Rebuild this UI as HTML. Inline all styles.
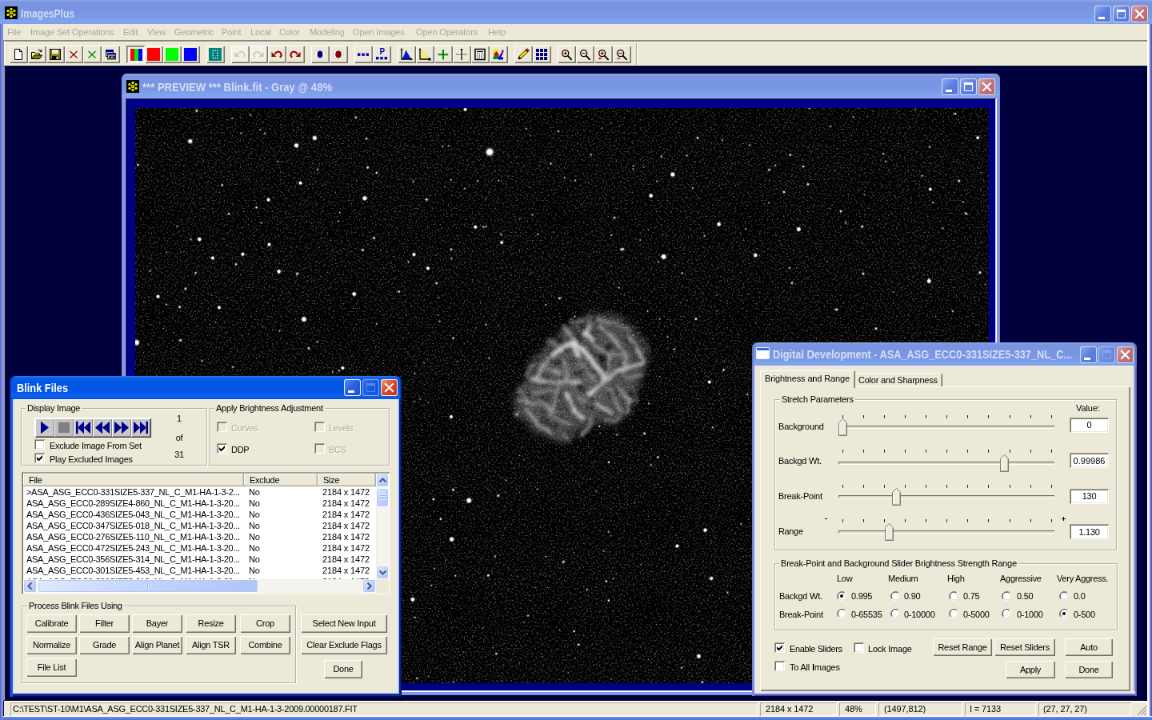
<!DOCTYPE html>
<html lang="en"><head><meta charset="utf-8"><title>ImagesPlus</title>
<style>
html,body{margin:0;padding:0;}
body{width:1152px;height:720px;overflow:hidden;background:#00003c;font-family:"Liberation Sans",sans-serif;font-size:11px;}
#r{position:absolute;left:0;top:0;width:1440px;height:900px;overflow:hidden;transform:scale(0.8);transform-origin:0 0;will-change:transform;}
#r div,#r svg{position:absolute;box-sizing:border-box;}
.t{white-space:nowrap;overflow:visible;}
.btn{background:#ece9d8;box-shadow:inset 1px 1px 0 #fff,inset -1px -1px 0 #716f64,inset -2px -2px 0 #aca899;text-align:center;}
.tb{background:#ece9d8;box-shadow:inset 1px 1px 0 #fff,inset -1px -1px 0 #716f64,inset -2px -2px 0 #aca899;}
.sunk{background:#fff;box-shadow:inset 1px 1px 0 #aca899,inset -1px -1px 0 #fff,inset 2px 2px 0 #716f64,inset -2px -2px 0 #ece9d8;}
.grp{border:1px solid #b5b2a1;box-shadow:1px 1px 0 #fff,inset 1px 1px 0 #fff;}
.leg{background:#ece9d8;padding:0 2px;}
.cb{background:#fff;box-shadow:inset 1px 1px 0 #aca899,inset -1px -1px 0 #fff,inset 2px 2px 0 #716f64,inset -2px -2px 0 #ece9d8;}
.cbd{background:#ece9d8;box-shadow:inset 1px 1px 0 #aca899,inset -1px -1px 0 #fff,inset 2px 2px 0 #716f64,inset -2px -2px 0 #ece9d8;}
</style></head><body><div id="r">

<div style="left:0px;top:0px;width:1440px;height:30px;background:linear-gradient(180deg,#8fa8ea 0,#7b96e0 10%,#7994e0 35%,#7b9ae6 70%,#82a5ef 92%,#7e9de8 100%);"></div>
<svg style="left:6px;top:8px" width="16" height="16" viewBox="0 0 16 16"><rect width="16" height="16" fill="#000"/><g fill="#e8e800"><circle cx="8" cy="8" r="2.2"/><circle cx="8" cy="3.4" r="1.7"/><circle cx="8" cy="12.6" r="1.7"/><circle cx="4" cy="5.6" r="1.7"/><circle cx="12" cy="5.6" r="1.7"/><circle cx="4" cy="10.4" r="1.7"/><circle cx="12" cy="10.4" r="1.7"/></g><g fill="#000"><circle cx="8" cy="8" r="0.7"/></g></svg>
<div class="t" style="left:26px;top:9px;height:17px;line-height:17px;font-size:14px;color:#d0dcf6;font-weight:bold;transform:scaleX(0.8609);transform-origin:0 50%;">ImagesPlus</div>
<div style="left:1368px;top:7px;width:21px;height:21px;border:1px solid rgba(240,244,253,0.8);border-radius:3px;background:linear-gradient(135deg,#8fa9ee 0,#5d7fe0 50%,#5878d8 100%);"><div style="left:4px;top:13px;width:8px;height:3px;background:#fff"></div></div>
<div style="left:1391px;top:7px;width:21px;height:21px;border:1px solid rgba(240,244,253,0.8);border-radius:3px;background:linear-gradient(135deg,#8fa9ee 0,#5d7fe0 50%,#5878d8 100%);"><div style="left:4px;top:4px;width:11px;height:11px;border:1px solid #fff;border-top-width:3px"></div></div>
<div style="left:1414px;top:7px;width:21px;height:21px;border:1px solid rgba(240,244,253,0.8);border-radius:3px;background:linear-gradient(135deg,#d8a0a8 0,#c2727a 50%,#b4656e 100%);"><svg style="left:0;top:0" width="19" height="19" viewBox="0 0 19 19"><path d="M5 5L14 14M14 5L5 14" stroke="#fff" stroke-width="2.2" stroke-linecap="square"/></svg></div>
<div style="left:0px;top:30px;width:4px;height:870px;background:linear-gradient(90deg,#5a66cc 0,#5a66cc 25%,#7485de 26%,#8a96dc 100%);"></div>
<div style="left:1434px;top:30px;width:6px;height:870px;background:linear-gradient(90deg,#fff 0,#fff 34%,#dfe2f2 35%,#dfe2f2 50%,#7a80cf 51%,#7a80cf 83%,#4c55b5 84%,#4c55b5 100%);"></div>
<div style="left:0px;top:895px;width:1440px;height:5px;background:linear-gradient(180deg,#fff 0,#fff 20%,#6f8fe4 21%,#4a74da 100%);"></div>
<div style="left:0px;top:895px;width:4px;height:5px;background:linear-gradient(90deg,#5a66cc 0,#5a66cc 25%,#7485de 26%,#7a8ee0 100%);"></div>
<div style="left:4px;top:30px;width:1430px;height:20px;background:#ece9d8;"></div>
<div class="t" style="left:9px;top:33px;height:14px;line-height:14px;font-size:11px;color:#aca899;letter-spacing:-0.12px;">File</div>
<div class="t" style="left:38px;top:33px;height:14px;line-height:14px;font-size:11px;color:#aca899;letter-spacing:-0.12px;">Image Set Operations</div>
<div class="t" style="left:154px;top:33px;height:14px;line-height:14px;font-size:11px;color:#aca899;letter-spacing:-0.12px;">Edit</div>
<div class="t" style="left:184px;top:33px;height:14px;line-height:14px;font-size:11px;color:#aca899;letter-spacing:-0.12px;">View</div>
<div class="t" style="left:218px;top:33px;height:14px;line-height:14px;font-size:11px;color:#aca899;letter-spacing:-0.12px;">Geometric</div>
<div class="t" style="left:277px;top:33px;height:14px;line-height:14px;font-size:11px;color:#aca899;letter-spacing:-0.12px;">Point</div>
<div class="t" style="left:313px;top:33px;height:14px;line-height:14px;font-size:11px;color:#aca899;letter-spacing:-0.12px;">Local</div>
<div class="t" style="left:349px;top:33px;height:14px;line-height:14px;font-size:11px;color:#aca899;letter-spacing:-0.12px;">Color</div>
<div class="t" style="left:387px;top:33px;height:14px;line-height:14px;font-size:11px;color:#aca899;letter-spacing:-0.12px;">Modeling</div>
<div class="t" style="left:441px;top:33px;height:14px;line-height:14px;font-size:11px;color:#aca899;letter-spacing:-0.12px;">Open Images</div>
<div class="t" style="left:520px;top:33px;height:14px;line-height:14px;font-size:11px;color:#aca899;letter-spacing:-0.12px;">Open Operators</div>
<div class="t" style="left:610px;top:33px;height:14px;line-height:14px;font-size:11px;color:#aca899;letter-spacing:-0.12px;">Help</div>
<div style="left:4px;top:50px;width:1430px;height:32px;background:#ece9d8;border-top:2px solid #8d8a7b;box-shadow:inset 0 1px 0 #fff,inset 0 -1px 0 #fff;"></div>
<div style="left:4px;top:51px;width:2px;height:31px;background:linear-gradient(90deg,#8d8a7b 50%,#fff 50%);"></div>
<div class="tb" style="left:12px;top:57px;width:23px;height:22px;"></div>
<svg style="left:15px;top:60px" width="16" height="16" viewBox="0 0 16 16"><path d="M3.5 1.5h6l3 3v10h-9z" fill="#fff" stroke="#000"/><path d="M9.5 1.5v3h3" fill="none" stroke="#000"/></svg>
<div class="tb" style="left:35px;top:57px;width:23px;height:22px;"></div>
<svg style="left:38px;top:60px" width="16" height="16" viewBox="0 0 16 16"><path d="M1.5 13.5v-8h4l1 1.5h5v2" fill="#ffff80" stroke="#000"/><path d="M1.5 13.5l3-4.5h10l-3 4.5z" fill="#808000" stroke="#000"/><path d="M9 3.5c1.5-2 3.5-1.5 4.5 0.5M14 2v2.5h-2.5" fill="none" stroke="#000"/></svg>
<div class="tb" style="left:58px;top:57px;width:23px;height:22px;"></div>
<svg style="left:61px;top:60px" width="16" height="16" viewBox="0 0 16 16"><rect x="1.5" y="1.5" width="13" height="13" fill="#808000" stroke="#000"/><rect x="4" y="2" width="8" height="5.5" fill="#ece9d8"/><rect x="4" y="10" width="8" height="4.5" fill="#000"/><rect x="9.5" y="10.5" width="2" height="3.5" fill="#ece9d8"/></svg>
<div class="tb" style="left:81px;top:57px;width:23px;height:22px;"></div>
<svg style="left:84px;top:60px" width="16" height="16" viewBox="0 0 16 16"><path d="M3.500 4L12.500 12.500M12.500 4L3.500 12.500" stroke="#a00000" stroke-width="1.200"/></svg>
<div class="tb" style="left:104px;top:57px;width:23px;height:22px;"></div>
<svg style="left:107px;top:60px" width="16" height="16" viewBox="0 0 16 16"><path d="M3.500 4L12.500 12.500M12.500 4L3.500 12.500" stroke="#008000" stroke-width="1.200"/></svg>
<div class="tb" style="left:127px;top:57px;width:23px;height:22px;"></div>
<svg style="left:130px;top:60px" width="16" height="16" viewBox="0 0 16 16"><rect x="2.500" y="2.500" width="9" height="8" fill="#c0c0c0" stroke="#000080"/><rect x="2" y="2" width="10" height="3" fill="#000080"/><rect x="4.500" y="6.500" width="10" height="7.500" fill="#c0c0c0" stroke="#202020"/><rect x="4" y="6" width="11" height="2.600" fill="#1a1a90"/><rect x="6.500" y="9.800" width="7" height="3.400" fill="#000"/><rect x="8.500" y="10.700" width="3" height="1.500" fill="#fff"/></svg>
<div style="left:158px;top:57px;width:23px;height:22px;background:#f7f6ef;box-shadow:inset 1px 1px 0 #716f64,inset -1px -1px 0 #fff,inset 2px 2px 0 #aca899;"></div>
<svg style="left:162px;top:60px" width="16" height="16" viewBox="0 0 16 16"><rect x="1" y="1" width="5" height="15" fill="#f00"/><rect x="6" y="1" width="5" height="15" fill="#0e0"/><rect x="11" y="1" width="5" height="15" fill="#00f"/></svg>
<div class="tb" style="left:181px;top:57px;width:23px;height:22px;"></div>
<svg style="left:184px;top:60px" width="16" height="16" viewBox="0 0 16 16"><rect x="0" y="0" width="16" height="16" fill="#f00"/></svg>
<div class="tb" style="left:204px;top:57px;width:23px;height:22px;"></div>
<svg style="left:207px;top:60px" width="16" height="16" viewBox="0 0 16 16"><rect x="0" y="0" width="16" height="16" fill="#0f0"/></svg>
<div class="tb" style="left:227px;top:57px;width:23px;height:22px;"></div>
<svg style="left:230px;top:60px" width="16" height="16" viewBox="0 0 16 16"><rect x="0" y="0" width="16" height="16" fill="#00f"/></svg>
<div class="tb" style="left:258px;top:57px;width:23px;height:22px;"></div>
<svg style="left:261px;top:60px" width="16" height="16" viewBox="0 0 16 16"><rect x="0" y="0" width="16" height="16" fill="#008080"/><rect x="4.5" y="2.5" width="1.400" height="1.400" fill="#fff"/><rect x="4.5" y="5.6" width="1.400" height="1.400" fill="#fff"/><rect x="4.5" y="8.7" width="1.400" height="1.400" fill="#fff"/><rect x="4.5" y="11.8" width="1.400" height="1.400" fill="#fff"/><rect x="10" y="2.5" width="1.400" height="1.400" fill="#fff"/><rect x="10" y="5.6" width="1.400" height="1.400" fill="#fff"/><rect x="10" y="8.7" width="1.400" height="1.400" fill="#fff"/><rect x="10" y="11.8" width="1.400" height="1.400" fill="#fff"/><rect x="7.25" y="2.5" width="1.400" height="1.400" fill="#fff"/><rect x="7.25" y="11.8" width="1.400" height="1.400" fill="#fff"/></svg>
<div class="tb" style="left:289px;top:57px;width:23px;height:22px;background:#f3f1e7;"></div>
<svg style="left:292px;top:60px" width="16" height="16" viewBox="0 0 16 16"><g><path d="M5.500 8C6.500 4 11.500 3.500 13.200 6.800C14.200 9 13 10.800 11.800 11.600" fill="none" stroke="#c4c1b2" stroke-width="1.3"/><path d="M1.500 5v6h6z" fill="#c4c1b2"/></g></svg>
<div class="tb" style="left:312px;top:57px;width:23px;height:22px;background:#f3f1e7;"></div>
<svg style="left:315px;top:60px" width="16" height="16" viewBox="0 0 16 16"><g transform="translate(16,0) scale(-1,1)"><path d="M5.500 8C6.500 4 11.500 3.500 13.200 6.800C14.200 9 13 10.800 11.800 11.600" fill="none" stroke="#c4c1b2" stroke-width="1.3"/><path d="M1.500 5v6h6z" fill="#c4c1b2"/></g></svg>
<div class="tb" style="left:335px;top:57px;width:23px;height:22px;"></div>
<svg style="left:338px;top:60px" width="16" height="16" viewBox="0 0 16 16"><g><path d="M5.500 8C6.500 4 11.500 3.500 13.200 6.800C14.200 9 13 10.800 11.800 11.600" fill="none" stroke="#9a0000" stroke-width="2.0"/><path d="M1.500 5v6h6z" fill="#9a0000"/></g></svg>
<div class="tb" style="left:358px;top:57px;width:23px;height:22px;"></div>
<svg style="left:361px;top:60px" width="16" height="16" viewBox="0 0 16 16"><g transform="translate(16,0) scale(-1,1)"><path d="M5.500 8C6.500 4 11.500 3.500 13.200 6.800C14.200 9 13 10.800 11.800 11.600" fill="none" stroke="#9a0000" stroke-width="2.0"/><path d="M1.500 5v6h6z" fill="#9a0000"/></g></svg>
<div class="tb" style="left:389px;top:57px;width:23px;height:22px;"></div>
<svg style="left:392px;top:60px" width="16" height="16" viewBox="0 0 16 16"><ellipse cx="8" cy="8" rx="6.5" ry="6" fill="#fff" stroke="#d4d2c8"/><ellipse cx="8" cy="8" rx="3.400" ry="4.400" fill="#000070"/></svg>
<div class="tb" style="left:412px;top:57px;width:23px;height:22px;"></div>
<svg style="left:415px;top:60px" width="16" height="16" viewBox="0 0 16 16"><ellipse cx="8" cy="8" rx="6.5" ry="6" fill="#fff" stroke="#d4d2c8"/><ellipse cx="8" cy="8" rx="3.800" ry="4.400" fill="#800000"/></svg>
<div class="tb" style="left:443px;top:57px;width:23px;height:22px;"></div>
<svg style="left:446px;top:60px" width="16" height="16" viewBox="0 0 16 16"><rect x="1" y="6.500" width="3.400" height="3.400" fill="#0000b8"/><rect x="6.300" y="6.500" width="3.400" height="3.400" fill="#0000b8"/><rect x="11.600" y="6.500" width="3.400" height="3.400" fill="#0000b8"/></svg>
<div class="tb" style="left:466px;top:57px;width:23px;height:22px;"></div>
<svg style="left:469px;top:60px" width="16" height="16" viewBox="0 0 16 16"><rect x="1" y="11" width="3.400" height="3.400" fill="#0000b8"/><rect x="6.300" y="11" width="3.400" height="3.400" fill="#0000b8"/><rect x="11.600" y="11" width="3.400" height="3.400" fill="#0000b8"/><text x="8.800" y="8.200" font-size="10" font-weight="bold" fill="#0000b8" text-anchor="middle" font-family="Liberation Sans,sans-serif">P</text></svg>
<div class="tb" style="left:497px;top:57px;width:23px;height:22px;"></div>
<svg style="left:500px;top:60px" width="16" height="16" viewBox="0 0 16 16"><path d="M2.500 14L5.500 8l2-5.500L10 7l4 7z" fill="#0018e0"/><path d="M2 1.500v12.500h13" fill="none" stroke="#000" stroke-width="1.300"/><path d="M2 0l-1.500 2.500h3zM16 14l-2.500-1.500v3z" fill="#000"/></svg>
<div class="tb" style="left:520px;top:57px;width:23px;height:22px;"></div>
<svg style="left:523px;top:60px" width="16" height="16" viewBox="0 0 16 16"><path d="M3 13.500V5c4.500-1.500 7.500 1 9 8.500z" fill="#f4f080" stroke="#e8e060" stroke-width="1"/><path d="M2 1.500v12.500h12" fill="none" stroke="#000" stroke-width="1.300"/><rect x="12.500" y="12.500" width="3" height="3" fill="#000"/><path d="M2 0l-1.500 2.500h3z" fill="#000"/></svg>
<div class="tb" style="left:543px;top:57px;width:23px;height:22px;"></div>
<svg style="left:546px;top:60px" width="16" height="16" viewBox="0 0 16 16"><path d="M8 2v12.500M1.800 8.200h12.400" stroke="#008800" stroke-width="2"/></svg>
<div class="tb" style="left:566px;top:57px;width:23px;height:22px;"></div>
<svg style="left:569px;top:60px" width="16" height="16" viewBox="0 0 16 16"><circle cx="8" cy="8" r="3.500" fill="#fff" opacity="0.8"/><path d="M1 8h14" stroke="#808080" stroke-width="1.300"/><path d="M8 1v14" stroke="#000" stroke-width="1.300"/><rect x="6.800" y="1" width="2.400" height="1.400" fill="#000"/></svg>
<div class="tb" style="left:589px;top:57px;width:23px;height:22px;"></div>
<svg style="left:592px;top:60px" width="16" height="16" viewBox="0 0 16 16"><rect x="2" y="1.500" width="12" height="13" fill="#fff" stroke="#000" stroke-width="1.500"/><path d="M4 4.500h8" stroke="#000" stroke-width="1.300"/><path d="M4 7.500h8.500M4 10h8.500M4 12.500h8.500" stroke="#000" stroke-width="1.200" stroke-dasharray="1.400 1.200"/></svg>
<div class="tb" style="left:612px;top:57px;width:23px;height:22px;"></div>
<svg style="left:615px;top:60px" width="16" height="16" viewBox="0 0 16 16"><rect x="1.500" y="2" width="6.500" height="6" fill="#f0e800"/><path d="M2 8.500l3.500-4.500 3.500 4.500z" fill="#c00000"/><rect x="2.500" y="8" width="6" height="3" fill="#a03020"/><rect x="1.500" y="10.500" width="7" height="3.500" fill="#008040"/><path d="M7.500 13l5-8.500 1.500 1-4 8.500z" fill="#0000d0"/><rect x="8" y="11.500" width="6" height="3" fill="#0000d0"/><path d="M11.500 4.500l2-3 1.500 3z" fill="#9000a0"/><rect x="12.300" y="4" width="1.600" height="3" fill="#9000a0"/></svg>
<div class="tb" style="left:643px;top:57px;width:23px;height:22px;"></div>
<svg style="left:646px;top:60px" width="16" height="16" viewBox="0 0 16 16"><path d="M2 14l1-3.5 8-8 2.5 2.5-8 8z" fill="#f0e000" stroke="#000" stroke-width="0.9"/><path d="M11 2.5l1.2-1.2a1 1 0 0 1 1.4 0l1.1 1.1a1 1 0 0 1 0 1.4L13.500 5z" fill="#e00000" stroke="#000" stroke-width="0.8"/><path d="M2 14l1-3.5 2.500 2.500z" fill="#000"/></svg>
<div class="tb" style="left:666px;top:57px;width:23px;height:22px;"></div>
<svg style="left:669px;top:60px" width="16" height="16" viewBox="0 0 16 16"><rect x="1" y="1" width="14" height="14" fill="#000080"/><path d="M5.500 1v14M10.500 1v14M1 5.500h14M1 10.500h14" stroke="#fff" stroke-width="1.1"/></svg>
<div class="tb" style="left:697px;top:57px;width:23px;height:22px;"></div>
<svg style="left:700px;top:60px" width="16" height="16" viewBox="0 0 16 16"><circle cx="6.700" cy="6.600" r="4" fill="#f6f4ec" stroke="#000" stroke-width="1.300"/><path d="M9.600 9.600l5 5.200" stroke="#000" stroke-width="1.900"/><path d="M4.500 6.600h4.400" stroke="#b00000" stroke-width="1.400"/><path d="M6.700 4.400v4.400" stroke="#b00000" stroke-width="1.400"/></svg>
<div class="tb" style="left:720px;top:57px;width:23px;height:22px;"></div>
<svg style="left:723px;top:60px" width="16" height="16" viewBox="0 0 16 16"><circle cx="6.700" cy="6.600" r="4" fill="#f6f4ec" stroke="#000" stroke-width="1.300"/><path d="M9.600 9.600l5 5.200" stroke="#000" stroke-width="1.900"/><path d="M4.500 6.600h4.400" stroke="#b00000" stroke-width="1.400"/></svg>
<div class="tb" style="left:743px;top:57px;width:23px;height:22px;"></div>
<svg style="left:746px;top:60px" width="16" height="16" viewBox="0 0 16 16"><circle cx="6.700" cy="6.600" r="4" fill="#f6f4ec" stroke="#000" stroke-width="1.300"/><path d="M9.600 9.600l5 5.200" stroke="#000" stroke-width="1.900"/><path d="M4.500 6.600h4.400" stroke="#b00000" stroke-width="1.400"/><path d="M6.700 4.400v4.400" stroke="#b00000" stroke-width="1.400"/><path d="M2.400 13.200h3.800" stroke="#c03030" stroke-width="1.600"/><path d="M3.600 11.800v2.800" stroke="#c03030" stroke-width="1.200"/></svg>
<div class="tb" style="left:766px;top:57px;width:23px;height:22px;"></div>
<svg style="left:769px;top:60px" width="16" height="16" viewBox="0 0 16 16"><circle cx="6.700" cy="6.600" r="4" fill="#f6f4ec" stroke="#000" stroke-width="1.300"/><path d="M9.600 9.600l5 5.200" stroke="#000" stroke-width="1.900"/><path d="M4.500 6.600h4.400" stroke="#b00000" stroke-width="1.400"/><path d="M2.400 13.200h3.800" stroke="#c03030" stroke-width="1.600"/></svg>
<div style="left:795px;top:54px;width:2px;height:27px;background:linear-gradient(90deg,#aca899 50%,#fff 50%);"></div>
<div style="left:4px;top:82px;width:1430px;height:794px;border-left:2px solid #8f97c4;border-top:1px solid #101020;box-shadow:inset 1px 0 0 #1e1e3c;"></div>
<div style="left:5px;top:875px;width:1429px;height:20px;background:#ece9d8;border-top:1px solid #00001c;box-shadow:inset 0 2px 0 #fff;"></div>
<div style="left:13px;top:878px;width:934px;height:17px;box-shadow:inset 1px 1px 0 #aca899,inset -1px -1px 0 #fff;"></div>
<div style="left:950px;top:878px;width:96px;height:17px;box-shadow:inset 1px 1px 0 #aca899,inset -1px -1px 0 #fff;"></div>
<div style="left:1049px;top:878px;width:46px;height:17px;box-shadow:inset 1px 1px 0 #aca899,inset -1px -1px 0 #fff;"></div>
<div style="left:1098px;top:878px;width:105px;height:17px;box-shadow:inset 1px 1px 0 #aca899,inset -1px -1px 0 #fff;"></div>
<div style="left:1206px;top:878px;width:89px;height:17px;box-shadow:inset 1px 1px 0 #aca899,inset -1px -1px 0 #fff;"></div>
<div style="left:1298px;top:878px;width:116px;height:17px;box-shadow:inset 1px 1px 0 #aca899,inset -1px -1px 0 #fff;"></div>
<div class="t" style="left:16px;top:879px;height:14px;line-height:14px;font-size:11px;color:#000;letter-spacing:-0.273px;">C:\TEST\ST-10\M1\ASA_ASG_ECC0-331SIZE5-337_NL_C_M1-HA-1-3-2009.00000187.FIT</div>
<div class="t" style="left:957px;top:879px;height:14px;line-height:14px;font-size:11px;color:#000;letter-spacing:-0.12px;">2184 x 1472</div>
<div class="t" style="left:1056px;top:879px;height:14px;line-height:14px;font-size:11px;color:#000;letter-spacing:-0.12px;">48%</div>
<div class="t" style="left:1105px;top:879px;height:14px;line-height:14px;font-size:11px;color:#000;letter-spacing:-0.12px;">(1497,812)</div>
<div class="t" style="left:1212px;top:879px;height:14px;line-height:14px;font-size:11px;color:#000;letter-spacing:-0.12px;">I = 7133</div>
<div class="t" style="left:1304px;top:879px;height:14px;line-height:14px;font-size:11px;color:#000;letter-spacing:-0.12px;">(27, 27, 27)</div>
<svg style="left:1420px;top:881px" width="14" height="14" viewBox="0 0 14 14"><path d="M13 2L2 13M13 6L6 13M13 10L10 13" stroke="#aca899" stroke-width="1.600"/><path d="M14 3L3 14M14 7L7 14M14 11L11 14" stroke="#fff" stroke-width="1"/></svg>
<div style="left:152px;top:92px;width:1098px;height:777px;background:#8797e3;border-radius:7px 7px 0 0;box-shadow:inset 1px 0 0 #7688dc,inset -1px 0 0 #7688dc,inset 0 -1px 0 #7688dc;"></div>
<div style="left:152px;top:92px;width:1098px;height:30px;background:linear-gradient(180deg,#8fa8ea 0,#7b96e0 10%,#7994e0 35%,#7b9ae6 70%,#82a5ef 92%,#7e9de8 100%);border-radius:7px 7px 0 0;"></div>
<svg style="left:158px;top:100px" width="16" height="16" viewBox="0 0 16 16"><rect width="16" height="16" fill="#000"/><g fill="#e8e800"><circle cx="8" cy="8" r="2.2"/><circle cx="8" cy="3.4" r="1.7"/><circle cx="8" cy="12.6" r="1.7"/><circle cx="4" cy="5.6" r="1.7"/><circle cx="12" cy="5.6" r="1.7"/><circle cx="4" cy="10.4" r="1.7"/><circle cx="12" cy="10.4" r="1.7"/></g><g fill="#000"><circle cx="8" cy="8" r="0.7"/></g></svg>
<div class="t" style="left:178px;top:100.5px;height:17px;line-height:17px;font-size:14px;color:#d4dff7;font-weight:bold;transform:scaleX(0.9329);transform-origin:0 50%;">*** PREVIEW *** Blink.fit - Gray @ 48%</div>
<div style="left:1177px;top:98px;width:21px;height:21px;border:1px solid rgba(240,244,253,0.8);border-radius:3px;background:linear-gradient(135deg,#8fa9ee 0,#5d7fe0 50%,#5878d8 100%);"><div style="left:4px;top:13px;width:8px;height:3px;background:#fff"></div></div>
<div style="left:1200px;top:98px;width:21px;height:21px;border:1px solid rgba(240,244,253,0.8);border-radius:3px;background:linear-gradient(135deg,#8fa9ee 0,#5d7fe0 50%,#5878d8 100%);"><div style="left:4px;top:4px;width:11px;height:11px;border:1px solid #fff;border-top-width:3px"></div></div>
<div style="left:1223px;top:98px;width:21px;height:21px;border:1px solid rgba(240,244,253,0.8);border-radius:3px;background:linear-gradient(135deg,#d8a0a8 0,#c2727a 50%,#b4656e 100%);"><svg style="left:0;top:0" width="19" height="19" viewBox="0 0 19 19"><path d="M5 5L14 14M14 5L5 14" stroke="#fff" stroke-width="2.2" stroke-linecap="square"/></svg></div>
<div style="left:156px;top:122px;width:1090px;height:743px;background:#000087;box-shadow:inset 1px 1px 0 #a9b1da,inset -1px -1px 0 #fff,inset 2px 2px 0 #20205a,inset -2px -2px 0 #d8dcf0;"></div>
<svg style="left:169px;top:135px" width="1067" height="719" viewBox="135.5 108 853.6 575.2"><defs><filter id="nz" x="0" y="0" width="100%" height="100%" color-interpolation-filters="sRGB"><feTurbulence type="fractalNoise" baseFrequency="0.62" numOctaves="2" seed="7" result="n"/><feColorMatrix in="n" type="matrix" values="1.15 0 0 0 -0.6 1.15 0 0 0 -0.6 1.15 0 0 0 -0.6 0 0 0 0 1"/></filter><filter id="sb" x="-2%" y="-2%" width="104%" height="104%"><feGaussianBlur stdDeviation="0.75"/></filter><filter id="nb" x="-30%" y="-30%" width="160%" height="160%"><feGaussianBlur stdDeviation="3.2"/></filter><filter id="fb" x="-30%" y="-30%" width="160%" height="160%"><feGaussianBlur stdDeviation="0.9"/></filter><filter id="neb" x="-15%" y="-15%" width="130%" height="130%" color-interpolation-filters="sRGB"><feTurbulence type="fractalNoise" baseFrequency="0.07" numOctaves="3" seed="11" result="t"/><feDisplacementMap in="SourceGraphic" in2="t" scale="9" xChannelSelector="R" yChannelSelector="G" result="d"/><feTurbulence type="fractalNoise" baseFrequency="0.085" numOctaves="3" seed="5" result="t2"/><feColorMatrix in="t2" type="matrix" values="0 2.0 0 0 -0.02  0 2.0 0 0 -0.02  0 2.0 0 0 -0.02  0 0 0 0 1" result="tex"/><feComposite in="d" in2="tex" operator="arithmetic" k1="1" k2="0" k3="0" k4="0"/></filter><filter id="nef" x="-15%" y="-15%" width="130%" height="130%" color-interpolation-filters="sRGB"><feTurbulence type="fractalNoise" baseFrequency="0.07" numOctaves="3" seed="11" result="t"/><feDisplacementMap in="SourceGraphic" in2="t" scale="7" xChannelSelector="R" yChannelSelector="G" result="d"/><feGaussianBlur in="d" stdDeviation="1.5"/></filter><radialGradient id="gs"><stop offset="0" stop-color="#fff"/><stop offset="0.42" stop-color="#fff"/><stop offset="0.6" stop-color="#fff" stop-opacity="0.55"/><stop offset="0.8" stop-color="#fff" stop-opacity="0.14"/><stop offset="1" stop-color="#fff" stop-opacity="0"/></radialGradient><radialGradient id="gd"><stop offset="0" stop-color="#fff"/><stop offset="0.25" stop-color="#fff" stop-opacity="0.85"/><stop offset="0.5" stop-color="#fff" stop-opacity="0.4"/><stop offset="0.75" stop-color="#fff" stop-opacity="0.1"/><stop offset="1" stop-color="#fff" stop-opacity="0"/></radialGradient></defs><rect x="135.5" y="108" width="853.6" height="575.2" fill="#000"/><g filter="url(#neb)"><g filter="url(#nb)"><polygon points="597.9,312.5 620.8,315.6 635.4,327.1 645.8,341.7 647.9,360.4 643.8,377.1 635.4,397.9 627.1,418.8 612.5,425.0 593.8,422.9 579.2,433.3 562.5,443.8 543.8,437.5 527.1,425.0 514.6,412.5 514.6,397.9 522.9,383.3 529.2,366.7 539.6,352.1 552.1,337.5 566.7,325.0 583.3,316.7" fill="#3a3a3a"/></g><g filter="url(#nb)"><polygon points="597.9,322.9 620.8,327.1 633.3,341.7 637.5,360.4 633.3,377.1 625.0,397.9 616.7,414.6 593.8,414.6 575.0,425.0 560.4,433.3 545.8,429.2 531.2,416.7 522.9,404.2 525.0,389.6 533.3,372.9 543.8,358.3 556.2,343.8 570.8,333.3 583.3,325.0" fill="#4a4a4a" opacity="0.85"/></g><g filter="url(#nb)"><polygon points="568.8,352.1 591.7,354.2 608.3,370.8 612.5,387.5 600.0,408.3 579.2,412.5 562.5,400.0 556.2,379.2 558.3,362.5" fill="#565656" opacity="0.7"/></g></g><g filter="url(#nef)" fill="none" stroke-linecap="round" stroke-linejoin="round" opacity="0.95"><path d="M553.1 355.2 Q562.5 346.9 567.2 344.8 Q571.9 342.7 576.6 345.8 Q581.2 349.0 585.4 352.6 Q589.6 356.2 593.2 360.4 Q596.9 364.6 599.5 368.8 Q602.1 372.9 604.2 380.2" stroke="#e0e0e0" stroke-width="4.2"/><path d="M604.2 380.2 Q612.5 375.0 617.7 372.4 Q622.9 369.8 628.1 368.2 Q633.3 366.7 643.8 362.5" stroke="#cccccc" stroke-width="3.36"/><path d="M604.2 380.2 Q600.0 386.5 597.4 388.5 Q594.8 390.6 589.6 392.7" stroke="#dddddd" stroke-width="3.92"/><path d="M531.2 378.1 Q541.7 381.2 547.9 381.8 Q554.2 382.3 560.4 381.8 Q566.7 381.2 571.9 382.3 Q577.1 383.3 583.3 382.3" stroke="#c4c4c4" stroke-width="3.22"/><path d="M568.8 393.8 Q569.8 402.1 571.4 405.7 Q572.9 409.4 575.5 412.0 Q578.1 414.6 583.3 416.7" stroke="#d4d4d4" stroke-width="3.64"/><path d="M597.9 403.1 Q604.2 408.3 611.5 413.5" stroke="#c8c8c8" stroke-width="3.36"/><path d="M585.4 333.3 L591.7 338.5" stroke="#c8c8c8" stroke-width="4.76"/><path d="M588.5 326.0 L587.1 331.2" stroke="#bcbcbc" stroke-width="3.64"/><path d="M574.0 349.0 L578.1 355.2" stroke="#dcdcdc" stroke-width="4.2"/><path d="M616.7 341.7 Q622.9 350.0 625.0 355.2 Q627.1 360.4 625.0 368.8" stroke="#b4b4b4" stroke-width="2.8"/><path d="M629.2 335.4 Q637.5 347.9 643.8 360.4" stroke="#a8a8a8" stroke-width="2.66"/><path d="M562.5 327.1 Q570.8 334.4 575.0 341.7" stroke="#b0b0b0" stroke-width="2.8"/><path d="M552.1 355.2 Q544.8 364.6 542.2 368.8 Q539.6 372.9 531.2 379.2" stroke="#b4b4b4" stroke-width="2.8"/><path d="M527.1 410.4 Q535.4 418.8 539.6 424.0 Q543.8 429.2 550.0 435.4" stroke="#acacac" stroke-width="2.8"/><path d="M518.8 400.0 Q529.2 404.2 537.5 403.1" stroke="#a4a4a4" stroke-width="2.52"/><path d="M616.7 385.4 Q625.0 393.8 628.1 397.9 Q631.2 402.1 627.1 412.5" stroke="#a8a8a8" stroke-width="2.66"/><path d="M608.3 389.6 Q616.7 400.0 622.9 410.4" stroke="#a4a4a4" stroke-width="2.52"/><path d="M591.7 417.7 Q589.6 427.1 583.3 435.4" stroke="#a8a8a8" stroke-width="2.66"/><path d="M562.5 433.3 L568.8 441.7" stroke="#a0a0a0" stroke-width="2.52"/><path d="M600.0 327.1 Q608.3 335.4 616.7 341.7" stroke="#b0b0b0" stroke-width="2.8"/><path d="M562.5 381.2 Q558.3 393.8 555.2 401.0 Q552.1 408.3 547.9 416.7" stroke="#a0a0a0" stroke-width="2.52"/><path d="M608.3 352.1 Q612.5 362.5 604.2 380.2" stroke="#a8a8a8" stroke-width="2.38"/><path d="M595.8 318.8 Q604.2 322.9 616.7 322.9" stroke="#9c9c9c" stroke-width="2.52"/><path d="M547.9 341.7 Q556.2 344.8 562.5 346.9" stroke="#a4a4a4" stroke-width="2.52"/><path d="M541.7 362.5 Q550.0 370.8 562.5 372.9" stroke="#a0a0a0" stroke-width="2.24"/><path d="M533.3 391.7 Q545.8 393.8 558.3 391.7" stroke="#a0a0a0" stroke-width="2.24"/><path d="M520.8 389.6 L527.1 400.0" stroke="#989898" stroke-width="2.1"/><path d="M579.2 362.5 Q587.5 368.8 593.8 379.2" stroke="#a8a8a8" stroke-width="2.1"/><path d="M562.5 360.4 Q568.8 368.8 566.7 379.2" stroke="#a0a0a0" stroke-width="2.1"/><path d="M612.5 352.1 Q620.8 358.3 629.2 356.2" stroke="#a0a0a0" stroke-width="2.24"/><path d="M593.8 341.7 Q600.0 352.1 610.4 354.2" stroke="#b0b0b0" stroke-width="2.38"/><path d="M625.0 375.0 Q635.4 379.2 643.8 375.0" stroke="#989898" stroke-width="2.1"/><path d="M579.2 397.9 Q587.5 404.2 595.8 402.1" stroke="#a8a8a8" stroke-width="2.24"/><path d="M552.1 416.7 Q562.5 422.9 572.9 425.0" stroke="#989898" stroke-width="2.1"/><path d="M537.5 400.0 Q547.9 408.3 560.4 412.5" stroke="#a0a0a0" stroke-width="2.1"/><path d="M604.2 418.8 Q612.5 422.9 622.9 416.7" stroke="#909090" stroke-width="2.1"/><path d="M568.8 320.8 Q579.2 322.9 587.5 318.8" stroke="#909090" stroke-width="2.1"/><path d="M616.7 327.1 Q625.0 325.0 633.3 331.2" stroke="#909090" stroke-width="2.1"/><path d="M525.0 375.0 Q531.2 368.8 539.6 362.5" stroke="#909090" stroke-width="1.96"/><path d="M633.3 387.5 Q637.5 395.8 635.4 404.2" stroke="#888888" stroke-width="1.96"/><circle cx="517.1" cy="414.6" r="1.6" fill="#ddd"/></g><g><circle cx="190.5" cy="141.25" r="3.25" fill="url(#gs)"/><circle cx="197" cy="110.75" r="2.23" fill="url(#gd)"/><circle cx="315" cy="138" r="3.25" fill="url(#gs)"/><circle cx="296.75" cy="145.5" r="3.25" fill="url(#gs)"/><circle cx="365" cy="198.25" r="3.25" fill="url(#gs)"/><circle cx="300.75" cy="183" r="2.50" fill="url(#gs)"/><circle cx="268.75" cy="199.75" r="2.50" fill="url(#gs)"/><circle cx="256.75" cy="207.5" r="1.95" fill="url(#gd)"/><circle cx="222.5" cy="185.25" r="1.95" fill="url(#gd)"/><circle cx="229.25" cy="213.75" r="1.95" fill="url(#gd)"/><circle cx="199.75" cy="239.25" r="2.80" fill="url(#gs)"/><circle cx="191.25" cy="239.25" r="1.67" fill="url(#gd)" opacity="0.8"/><circle cx="269.5" cy="244.5" r="2.50" fill="url(#gs)"/><circle cx="243" cy="254.25" r="2.50" fill="url(#gs)"/><circle cx="213" cy="258" r="2.50" fill="url(#gs)"/><circle cx="236.25" cy="264.25" r="1.95" fill="url(#gd)"/><circle cx="279.25" cy="271.5" r="2.80" fill="url(#gs)"/><circle cx="297.5" cy="273.75" r="2.37" fill="url(#gd)"/><circle cx="368" cy="167.5" r="2.23" fill="url(#gd)"/><circle cx="377" cy="172.75" r="1.95" fill="url(#gd)"/><circle cx="366.75" cy="138.75" r="1.95" fill="url(#gd)"/><circle cx="356.25" cy="117.5" r="1.95" fill="url(#gd)"/><circle cx="363" cy="250" r="2.23" fill="url(#gd)"/><circle cx="374.25" cy="238" r="2.23" fill="url(#gd)"/><circle cx="414.25" cy="254.5" r="2.50" fill="url(#gs)"/><circle cx="408.75" cy="261.75" r="1.67" fill="url(#gd)" opacity="0.8"/><circle cx="138.25" cy="165" r="1.95" fill="url(#gd)"/><circle cx="150.5" cy="271" r="1.67" fill="url(#gd)" opacity="0.8"/><circle cx="318" cy="169.75" r="1.67" fill="url(#gd)" opacity="0.8"/><circle cx="278" cy="161.5" r="1.53" fill="url(#gd)" opacity="0.8"/><circle cx="261.75" cy="222.75" r="1.67" fill="url(#gd)" opacity="0.8"/><circle cx="338.75" cy="221.25" r="1.53" fill="url(#gd)" opacity="0.8"/><circle cx="340" cy="212.5" r="1.53" fill="url(#gd)" opacity="0.8"/><circle cx="413.75" cy="181.25" r="1.67" fill="url(#gd)" opacity="0.8"/><circle cx="250.75" cy="115" r="1.67" fill="url(#gd)" opacity="0.8"/><circle cx="232.5" cy="118.25" r="1.53" fill="url(#gd)" opacity="0.8"/><circle cx="260.5" cy="129.75" r="1.53" fill="url(#gd)" opacity="0.8"/><circle cx="265" cy="133.75" r="1.53" fill="url(#gd)" opacity="0.8"/><circle cx="241.25" cy="133.25" r="1.53" fill="url(#gd)" opacity="0.8"/><circle cx="177.5" cy="226.25" r="1.67" fill="url(#gd)" opacity="0.8"/><circle cx="196.25" cy="272.5" r="1.53" fill="url(#gd)" opacity="0.8"/><circle cx="166.75" cy="252.5" r="1.39" fill="url(#gd)" opacity="0.55"/><circle cx="490" cy="152" r="5.50" fill="url(#gs)"/><circle cx="465.5" cy="109.5" r="2.50" fill="url(#gs)"/><circle cx="673" cy="174.5" r="3.25" fill="url(#gs)"/><circle cx="651.25" cy="195.75" r="2.80" fill="url(#gs)"/><circle cx="664" cy="256.75" r="3.70" fill="url(#gs)"/><circle cx="475.75" cy="227" r="2.50" fill="url(#gs)"/><circle cx="483.5" cy="226.75" r="1.81" fill="url(#gd)" opacity="0.8"/><circle cx="486.25" cy="226.75" r="1.81" fill="url(#gd)" opacity="0.8"/><circle cx="502" cy="242.5" r="2.35" fill="url(#gs)"/><circle cx="501.25" cy="234.5" r="1.67" fill="url(#gd)" opacity="0.8"/><circle cx="428.25" cy="268.25" r="2.50" fill="url(#gs)"/><circle cx="427" cy="199.5" r="2.23" fill="url(#gd)"/><circle cx="451.5" cy="249.5" r="1.95" fill="url(#gd)"/><circle cx="451.75" cy="258.25" r="1.81" fill="url(#gd)" opacity="0.8"/><circle cx="621.75" cy="249.5" r="2.37" fill="url(#gd)"/><circle cx="623.5" cy="249" r="1.95" fill="url(#gd)"/><circle cx="614.75" cy="217.75" r="1.95" fill="url(#gd)"/><circle cx="698" cy="138" r="2.09" fill="url(#gd)"/><circle cx="661.75" cy="156.5" r="1.81" fill="url(#gd)" opacity="0.8"/><circle cx="687.25" cy="155.5" r="1.67" fill="url(#gd)" opacity="0.8"/><circle cx="693" cy="188" r="1.67" fill="url(#gd)" opacity="0.8"/><circle cx="591.25" cy="154.75" r="1.81" fill="url(#gd)" opacity="0.8"/><circle cx="558.75" cy="131.25" r="1.81" fill="url(#gd)" opacity="0.8"/><circle cx="551.25" cy="163.75" r="1.81" fill="url(#gd)" opacity="0.8"/><circle cx="540" cy="165.75" r="1.39" fill="url(#gd)" opacity="0.55"/><circle cx="565" cy="177.75" r="1.67" fill="url(#gd)" opacity="0.8"/><circle cx="575.5" cy="180.25" r="1.67" fill="url(#gd)" opacity="0.8"/><circle cx="633.75" cy="165.75" r="1.53" fill="url(#gd)" opacity="0.8"/><circle cx="633.5" cy="169" r="1.53" fill="url(#gd)" opacity="0.8"/><circle cx="644.25" cy="167.25" r="1.39" fill="url(#gd)" opacity="0.55"/><circle cx="657.25" cy="181.25" r="1.53" fill="url(#gd)" opacity="0.8"/><circle cx="478" cy="180.75" r="1.67" fill="url(#gd)" opacity="0.8"/><circle cx="498.75" cy="180.5" r="1.53" fill="url(#gd)" opacity="0.8"/><circle cx="451.25" cy="179.75" r="1.67" fill="url(#gd)" opacity="0.8"/><circle cx="445" cy="186.75" r="1.39" fill="url(#gd)" opacity="0.55"/><circle cx="465" cy="188.5" r="1.67" fill="url(#gd)" opacity="0.8"/><circle cx="443" cy="146.5" r="1.67" fill="url(#gd)" opacity="0.8"/><circle cx="449" cy="145.75" r="1.53" fill="url(#gd)" opacity="0.8"/><circle cx="526.5" cy="128.5" r="1.53" fill="url(#gd)" opacity="0.8"/><circle cx="531" cy="135.75" r="1.39" fill="url(#gd)" opacity="0.55"/><circle cx="601.75" cy="128.25" r="1.39" fill="url(#gd)" opacity="0.55"/><circle cx="532.5" cy="215" r="1.53" fill="url(#gd)" opacity="0.8"/><circle cx="538" cy="234.25" r="1.67" fill="url(#gd)" opacity="0.8"/><circle cx="554" cy="232" r="1.39" fill="url(#gd)" opacity="0.55"/><circle cx="611.75" cy="235.25" r="1.53" fill="url(#gd)" opacity="0.8"/><circle cx="640.5" cy="240" r="1.53" fill="url(#gd)" opacity="0.8"/><circle cx="648.5" cy="229.5" r="1.39" fill="url(#gd)" opacity="0.55"/><circle cx="663" cy="234.5" r="1.39" fill="url(#gd)" opacity="0.55"/><circle cx="658.75" cy="262" r="1.53" fill="url(#gd)" opacity="0.8"/><circle cx="682.5" cy="273.25" r="1.81" fill="url(#gd)" opacity="0.8"/><circle cx="675.5" cy="265" r="1.39" fill="url(#gd)" opacity="0.55"/><circle cx="704.75" cy="235.75" r="1.67" fill="url(#gd)" opacity="0.8"/><circle cx="486.75" cy="199" r="1.39" fill="url(#gd)" opacity="0.55"/><circle cx="520" cy="218.75" r="1.39" fill="url(#gd)" opacity="0.55"/><circle cx="482.5" cy="117" r="1.39" fill="url(#gd)" opacity="0.55"/><circle cx="581.75" cy="204.5" r="1.25" fill="url(#gd)" opacity="0.55"/><circle cx="531.25" cy="273.25" r="1.39" fill="url(#gd)" opacity="0.55"/><circle cx="719.25" cy="224.25" r="2.95" fill="url(#gs)"/><circle cx="799" cy="229.25" r="3.10" fill="url(#gs)"/><circle cx="755.75" cy="255.25" r="2.80" fill="url(#gs)"/><circle cx="978" cy="137.75" r="2.35" fill="url(#gs)"/><circle cx="930.5" cy="189.25" r="2.35" fill="url(#gs)"/><circle cx="959.25" cy="181" r="2.23" fill="url(#gd)"/><circle cx="980.25" cy="272.5" r="2.37" fill="url(#gd)"/><circle cx="863.5" cy="273.75" r="2.23" fill="url(#gd)"/><circle cx="862.5" cy="226.5" r="2.23" fill="url(#gd)"/><circle cx="846" cy="222.75" r="1.81" fill="url(#gd)" opacity="0.8"/><circle cx="841" cy="211.25" r="2.09" fill="url(#gd)"/><circle cx="808.25" cy="184.25" r="2.09" fill="url(#gd)"/><circle cx="784.25" cy="192" r="2.09" fill="url(#gd)"/><circle cx="769.5" cy="169.75" r="2.09" fill="url(#gd)"/><circle cx="775.75" cy="165.25" r="1.67" fill="url(#gd)" opacity="0.8"/><circle cx="790.5" cy="155" r="1.95" fill="url(#gd)"/><circle cx="803.5" cy="166.5" r="1.95" fill="url(#gd)"/><circle cx="749.75" cy="145.25" r="1.81" fill="url(#gd)" opacity="0.8"/><circle cx="722.75" cy="140" r="1.53" fill="url(#gd)" opacity="0.8"/><circle cx="883.5" cy="153.75" r="1.81" fill="url(#gd)" opacity="0.8"/><circle cx="886" cy="161.25" r="1.53" fill="url(#gd)" opacity="0.8"/><circle cx="929.75" cy="147" r="1.81" fill="url(#gd)" opacity="0.8"/><circle cx="955.5" cy="113.75" r="1.95" fill="url(#gd)"/><circle cx="853.5" cy="117" r="1.53" fill="url(#gd)" opacity="0.8"/><circle cx="831" cy="126.5" r="1.67" fill="url(#gd)" opacity="0.8"/><circle cx="809.75" cy="108.5" r="1.67" fill="url(#gd)" opacity="0.8"/><circle cx="789.75" cy="268" r="1.81" fill="url(#gd)" opacity="0.8"/><circle cx="769" cy="202.75" r="1.53" fill="url(#gd)" opacity="0.8"/><circle cx="746" cy="228.75" r="1.53" fill="url(#gd)" opacity="0.8"/><circle cx="966" cy="213.25" r="1.95" fill="url(#gd)"/><circle cx="967" cy="214.2" r="1.67" fill="url(#gd)" opacity="0.8"/><circle cx="933" cy="202.5" r="1.67" fill="url(#gd)" opacity="0.8"/><circle cx="963.5" cy="202" r="1.53" fill="url(#gd)" opacity="0.8"/><circle cx="943" cy="228.25" r="1.53" fill="url(#gd)" opacity="0.8"/><circle cx="922.75" cy="175.75" r="1.53" fill="url(#gd)" opacity="0.8"/><circle cx="899" cy="143.75" r="1.25" fill="url(#gd)" opacity="0.55"/><circle cx="835.25" cy="170.75" r="1.39" fill="url(#gd)" opacity="0.55"/><circle cx="864.25" cy="194.25" r="1.39" fill="url(#gd)" opacity="0.55"/><circle cx="859" cy="190" r="1.25" fill="url(#gd)" opacity="0.55"/><circle cx="827.25" cy="261.75" r="1.39" fill="url(#gd)" opacity="0.55"/><circle cx="862.75" cy="243" r="1.25" fill="url(#gd)" opacity="0.55"/><circle cx="981" cy="172.5" r="1.39" fill="url(#gd)" opacity="0.55"/><circle cx="915.5" cy="109.5" r="1.39" fill="url(#gd)" opacity="0.55"/><circle cx="929.25" cy="279" r="1.81" fill="url(#gd)" opacity="0.8"/><circle cx="137" cy="342.5" r="4.00" fill="url(#gs)"/><circle cx="304.25" cy="319.25" r="3.70" fill="url(#gs)"/><circle cx="354.5" cy="294" r="2.95" fill="url(#gs)"/><circle cx="219.5" cy="307.5" r="2.50" fill="url(#gs)"/><circle cx="158.25" cy="296.5" r="2.50" fill="url(#gs)"/><circle cx="180" cy="307" r="2.23" fill="url(#gd)"/><circle cx="185.75" cy="288.75" r="2.09" fill="url(#gd)"/><circle cx="180.75" cy="340.25" r="2.23" fill="url(#gd)"/><circle cx="166.75" cy="304.5" r="1.67" fill="url(#gd)" opacity="0.8"/><circle cx="309" cy="348.25" r="2.09" fill="url(#gd)"/><circle cx="317.5" cy="342" r="1.67" fill="url(#gd)" opacity="0.8"/><circle cx="343" cy="368" r="2.35" fill="url(#gs)"/><circle cx="339.5" cy="370.75" r="1.81" fill="url(#gd)" opacity="0.8"/><circle cx="333" cy="371.75" r="1.53" fill="url(#gd)" opacity="0.8"/><circle cx="233" cy="367" r="1.81" fill="url(#gd)" opacity="0.8"/><circle cx="202.25" cy="360.75" r="1.67" fill="url(#gd)" opacity="0.8"/><circle cx="216" cy="322.5" r="1.39" fill="url(#gd)" opacity="0.55"/><circle cx="280" cy="331" r="1.53" fill="url(#gd)" opacity="0.8"/><circle cx="263" cy="327" r="1.25" fill="url(#gd)" opacity="0.55"/><circle cx="399.25" cy="291.75" r="1.95" fill="url(#gd)"/><circle cx="377" cy="323.75" r="1.53" fill="url(#gd)" opacity="0.8"/><circle cx="406.75" cy="315" r="1.25" fill="url(#gd)" opacity="0.55"/><circle cx="195.75" cy="273.5" r="1.53" fill="url(#gd)" opacity="0.8"/><circle cx="163.75" cy="328.5" r="1.39" fill="url(#gd)" opacity="0.55"/><circle cx="144.25" cy="301.75" r="1.39" fill="url(#gd)" opacity="0.55"/><circle cx="415" cy="373.25" r="1.53" fill="url(#gd)" opacity="0.8"/><circle cx="415" cy="401.25" r="1.39" fill="url(#gd)" opacity="0.55"/><circle cx="373.75" cy="340.75" r="1.25" fill="url(#gd)" opacity="0.55"/><circle cx="436.75" cy="283.25" r="1.95" fill="url(#gd)"/><circle cx="560" cy="298.25" r="2.09" fill="url(#gd)"/><circle cx="546" cy="304.75" r="1.67" fill="url(#gd)" opacity="0.8"/><circle cx="696.25" cy="319" r="2.23" fill="url(#gd)"/><circle cx="453.5" cy="338.25" r="1.95" fill="url(#gd)"/><circle cx="486.25" cy="324.5" r="1.81" fill="url(#gd)" opacity="0.8"/><circle cx="498.5" cy="326.25" r="1.39" fill="url(#gd)" opacity="0.55"/><circle cx="451.5" cy="416.75" r="2.50" fill="url(#gs)"/><circle cx="489.25" cy="358.25" r="1.67" fill="url(#gd)" opacity="0.8"/><circle cx="439.75" cy="321.25" r="1.53" fill="url(#gd)" opacity="0.8"/><circle cx="438.75" cy="315.25" r="1.39" fill="url(#gd)" opacity="0.55"/><circle cx="439.25" cy="297.5" r="1.39" fill="url(#gd)" opacity="0.55"/><circle cx="619.25" cy="287.75" r="1.67" fill="url(#gd)" opacity="0.8"/><circle cx="614.25" cy="283.75" r="1.39" fill="url(#gd)" opacity="0.55"/><circle cx="575" cy="316.5" r="1.67" fill="url(#gd)" opacity="0.8"/><circle cx="571.25" cy="319.25" r="1.39" fill="url(#gd)" opacity="0.55"/><circle cx="648" cy="311.25" r="1.53" fill="url(#gd)" opacity="0.8"/><circle cx="660" cy="319" r="1.53" fill="url(#gd)" opacity="0.8"/><circle cx="668" cy="337" r="1.53" fill="url(#gd)" opacity="0.8"/><circle cx="674.25" cy="349" r="1.67" fill="url(#gd)" opacity="0.8"/><circle cx="675.2" cy="349.6" r="1.39" fill="url(#gd)" opacity="0.55"/><circle cx="660" cy="376.75" r="1.39" fill="url(#gd)" opacity="0.55"/><circle cx="649.25" cy="403.75" r="1.67" fill="url(#gd)" opacity="0.8"/><circle cx="644.75" cy="433.5" r="2.09" fill="url(#gd)"/><circle cx="617.25" cy="434.75" r="1.67" fill="url(#gd)" opacity="0.8"/><circle cx="599.75" cy="426.25" r="1.81" fill="url(#gd)" opacity="0.8"/><circle cx="633.5" cy="335" r="1.39" fill="url(#gd)" opacity="0.55"/><circle cx="517.25" cy="414.25" r="1.67" fill="url(#gd)" opacity="0.8"/><circle cx="420.25" cy="399.25" r="1.39" fill="url(#gd)" opacity="0.55"/><circle cx="428.75" cy="402.75" r="1.39" fill="url(#gd)" opacity="0.55"/><circle cx="424.25" cy="362.5" r="1.39" fill="url(#gd)" opacity="0.55"/><circle cx="458" cy="361.25" r="1.39" fill="url(#gd)" opacity="0.55"/><circle cx="422.5" cy="430" r="1.39" fill="url(#gd)" opacity="0.55"/><circle cx="698.75" cy="398.75" r="1.25" fill="url(#gd)" opacity="0.55"/><circle cx="476" cy="328" r="1.25" fill="url(#gd)" opacity="0.55"/><circle cx="929.25" cy="281.25" r="2.95" fill="url(#gs)"/><circle cx="792.25" cy="283" r="1.95" fill="url(#gd)"/><circle cx="836.25" cy="309.5" r="1.95" fill="url(#gd)"/><circle cx="837.6" cy="309.5" r="1.67" fill="url(#gd)" opacity="0.8"/><circle cx="876.25" cy="328.5" r="2.23" fill="url(#gd)"/><circle cx="953" cy="311.25" r="1.81" fill="url(#gd)" opacity="0.8"/><circle cx="893.5" cy="292" r="1.39" fill="url(#gd)" opacity="0.55"/><circle cx="709.75" cy="382" r="2.35" fill="url(#gs)"/><circle cx="724" cy="370" r="1.95" fill="url(#gd)"/><circle cx="747.75" cy="394.5" r="1.81" fill="url(#gd)" opacity="0.8"/><circle cx="713" cy="427.5" r="1.67" fill="url(#gd)" opacity="0.8"/><circle cx="717.25" cy="295" r="1.39" fill="url(#gd)" opacity="0.55"/><circle cx="748.5" cy="294.25" r="1.25" fill="url(#gd)" opacity="0.55"/><circle cx="717.25" cy="310.75" r="1.39" fill="url(#gd)" opacity="0.55"/><circle cx="738.5" cy="334.5" r="1.39" fill="url(#gd)" opacity="0.55"/><circle cx="724.75" cy="361.25" r="1.39" fill="url(#gd)" opacity="0.55"/><circle cx="719.75" cy="393.75" r="1.25" fill="url(#gd)" opacity="0.55"/><circle cx="756" cy="323" r="1.25" fill="url(#gd)" opacity="0.55"/><circle cx="936" cy="316.75" r="1.25" fill="url(#gd)" opacity="0.55"/><circle cx="985.5" cy="284.25" r="1.39" fill="url(#gd)" opacity="0.55"/><circle cx="469.25" cy="500.5" r="3.70" fill="url(#gs)"/><circle cx="452" cy="539.25" r="3.25" fill="url(#gs)"/><circle cx="413" cy="599.5" r="2.95" fill="url(#gs)"/><circle cx="677.5" cy="546" r="2.50" fill="url(#gs)"/><circle cx="453.5" cy="489.75" r="2.23" fill="url(#gd)"/><circle cx="433.75" cy="499.25" r="2.09" fill="url(#gd)"/><circle cx="498.5" cy="495.75" r="2.23" fill="url(#gd)"/><circle cx="441" cy="519" r="2.09" fill="url(#gd)"/><circle cx="563.75" cy="562" r="2.23" fill="url(#gd)"/><circle cx="488.5" cy="575.5" r="2.23" fill="url(#gd)"/><circle cx="455.75" cy="575.75" r="1.81" fill="url(#gd)" opacity="0.8"/><circle cx="609.25" cy="462.25" r="1.95" fill="url(#gd)"/><circle cx="658.25" cy="457.25" r="2.09" fill="url(#gd)"/><circle cx="651.25" cy="465" r="1.81" fill="url(#gd)" opacity="0.8"/><circle cx="606.5" cy="581.25" r="1.95" fill="url(#gd)"/><circle cx="613.5" cy="578.75" r="1.53" fill="url(#gd)" opacity="0.8"/><circle cx="609" cy="600.5" r="1.95" fill="url(#gd)"/><circle cx="587.5" cy="589.5" r="1.67" fill="url(#gd)" opacity="0.8"/><circle cx="528.25" cy="615.75" r="1.81" fill="url(#gd)" opacity="0.8"/><circle cx="415.25" cy="617.5" r="1.81" fill="url(#gd)" opacity="0.8"/><circle cx="495.5" cy="556.25" r="1.67" fill="url(#gd)" opacity="0.8"/><circle cx="506.25" cy="480.25" r="1.53" fill="url(#gd)" opacity="0.8"/><circle cx="537.5" cy="489.25" r="1.53" fill="url(#gd)" opacity="0.8"/><circle cx="546.25" cy="556.5" r="1.53" fill="url(#gd)" opacity="0.8"/><circle cx="574" cy="552.75" r="1.39" fill="url(#gd)" opacity="0.55"/><circle cx="604" cy="551" r="1.53" fill="url(#gd)" opacity="0.8"/><circle cx="608.75" cy="531.75" r="1.53" fill="url(#gd)" opacity="0.8"/><circle cx="641.25" cy="564.5" r="1.39" fill="url(#gd)" opacity="0.55"/><circle cx="434.75" cy="568.5" r="1.53" fill="url(#gd)" opacity="0.8"/><circle cx="446" cy="560" r="1.39" fill="url(#gd)" opacity="0.55"/><circle cx="446.75" cy="566.25" r="1.25" fill="url(#gd)" opacity="0.55"/><circle cx="431.5" cy="585.5" r="1.53" fill="url(#gd)" opacity="0.8"/><circle cx="465.5" cy="538.5" r="1.25" fill="url(#gd)" opacity="0.55"/><circle cx="479.25" cy="465" r="1.39" fill="url(#gd)" opacity="0.55"/><circle cx="536" cy="587.5" r="1.39" fill="url(#gd)" opacity="0.55"/><circle cx="547.75" cy="587.5" r="1.25" fill="url(#gd)" opacity="0.55"/><circle cx="494.25" cy="597" r="1.25" fill="url(#gd)" opacity="0.55"/><circle cx="519.75" cy="455.5" r="1.39" fill="url(#gd)" opacity="0.55"/><circle cx="596" cy="491" r="1.25" fill="url(#gd)" opacity="0.55"/><circle cx="634.75" cy="502.25" r="1.25" fill="url(#gd)" opacity="0.55"/><circle cx="678" cy="538.25" r="1.25" fill="url(#gd)" opacity="0.55"/><circle cx="519.75" cy="492.5" r="1.25" fill="url(#gd)" opacity="0.55"/><circle cx="534.75" cy="573.75" r="1.25" fill="url(#gd)" opacity="0.55"/><circle cx="524.1" cy="622.2" r="1.39" fill="url(#gd)" opacity="0.55"/><circle cx="574.4" cy="631.25" r="1.95" fill="url(#gd)"/><circle cx="578.8" cy="644.7" r="2.09" fill="url(#gd)"/><circle cx="496.6" cy="653.75" r="1.95" fill="url(#gd)"/><circle cx="493.2" cy="647.8" r="1.39" fill="url(#gd)" opacity="0.55"/><circle cx="699.1" cy="656.25" r="2.95" fill="url(#gs)"/><circle cx="681.9" cy="667.8" r="1.81" fill="url(#gd)" opacity="0.8"/><circle cx="417.25" cy="678.4" r="1.81" fill="url(#gd)" opacity="0.8"/><circle cx="702.6" cy="682.2" r="2.09" fill="url(#gd)"/><circle cx="453.8" cy="681.9" r="1.53" fill="url(#gd)" opacity="0.8"/><circle cx="461.6" cy="679.7" r="1.39" fill="url(#gd)" opacity="0.55"/><circle cx="483.5" cy="627.8" r="1.39" fill="url(#gd)" opacity="0.55"/><circle cx="470" cy="641.9" r="1.25" fill="url(#gd)" opacity="0.55"/><circle cx="464.1" cy="652.2" r="1.25" fill="url(#gd)" opacity="0.55"/><circle cx="560" cy="629.7" r="1.25" fill="url(#gd)" opacity="0.55"/><circle cx="575.7" cy="658.1" r="1.25" fill="url(#gd)" opacity="0.55"/><circle cx="542.9" cy="656.9" r="1.25" fill="url(#gd)" opacity="0.55"/><circle cx="568.5" cy="672.5" r="1.25" fill="url(#gd)" opacity="0.55"/><circle cx="655.4" cy="653.75" r="1.25" fill="url(#gd)" opacity="0.55"/><circle cx="648.5" cy="659.4" r="1.11" fill="url(#gd)" opacity="0.55"/><circle cx="428.8" cy="676.25" r="1.25" fill="url(#gd)" opacity="0.55"/><circle cx="711.6" cy="578.4" r="2.65" fill="url(#gs)"/><circle cx="727.9" cy="592.5" r="1.81" fill="url(#gd)" opacity="0.8"/><circle cx="742.9" cy="606.9" r="1.25" fill="url(#gd)" opacity="0.55"/><circle cx="705.5" cy="530.1" r="2.80" fill="url(#gs)"/><circle cx="741.3" cy="523.9" r="1.67" fill="url(#gd)" opacity="0.8"/><circle cx="684.5" cy="465.9" r="1.25" fill="url(#gd)" opacity="0.55"/></g><rect x="135.5" y="108" width="853.6" height="575.2" filter="url(#nz)" style="mix-blend-mode:screen"/></svg>
<div style="left:18px;top:499px;width:478px;height:367px;background:#ece9d8;border-top:1px solid #f8f7f0;"></div>
<div style="left:12px;top:499px;width:6px;height:372px;background:linear-gradient(90deg,#0a2aa0 0.00%,#0a2aa0 16.67%,#2259d6 16.67%,#2259d6 66.67%,#cfe4ff 66.67%,#cfe4ff 100.00%);"></div>
<div style="left:496px;top:499px;width:6px;height:372px;background:linear-gradient(90deg,#dfe8fb 0.00%,#dfe8fb 25.00%,#86a4ef 25.00%,#86a4ef 41.67%,#0a2690 41.67%,#0a2690 83.33%,#00124f 83.33%,#00124f 100.00%);"></div>
<div style="left:16px;top:866px;width:482.5px;height:5px;background:linear-gradient(180deg,#cfe0fa 0.00%,#cfe0fa 24.00%,#0a2fa0 24.00%,#0a2fa0 76.00%,#00124f 76.00%,#00124f 100.00%);"></div>
<div style="left:12px;top:470px;width:490px;height:29px;background:linear-gradient(180deg,#2b7af2 0,#0a5fe8 10%,#0456e2 30%,#0355e4 60%,#0b62f2 88%,#0550d8 100%);border-radius:7px 7px 0 0;box-shadow:inset 1px 0 0 #0a2aa0,inset -1px 0 0 #0a2aa0,inset 2px 0 0 rgba(0,0,60,0.25),inset -2px 0 0 rgba(0,0,60,0.25);"></div>
<div class="t" style="left:21px;top:476.5px;height:17px;line-height:17px;font-size:14px;color:#fff;font-weight:bold;transform:scaleX(0.9139);transform-origin:0 50%;">Blink Files</div>
<div style="left:430px;top:474px;width:21px;height:21px;border:1px solid rgba(255,255,255,0.92);border-radius:3px;background:linear-gradient(135deg,#5a8cf5 0,#2a62e0 45%,#1d4fd0 100%);"><div style="left:4px;top:13px;width:8px;height:3px;background:#fff"></div></div>
<div style="left:453px;top:474px;width:21px;height:21px;border:1px solid rgba(255,255,255,0.92);border-radius:3px;opacity:0.55;background:linear-gradient(135deg,#5a8cf5 0,#2a62e0 45%,#1d4fd0 100%);"><div style="left:4px;top:4px;width:11px;height:11px;border:1px solid #8fb0f5;border-top-width:3px"></div></div>
<div style="left:476px;top:474px;width:21px;height:21px;border:1px solid rgba(255,255,255,0.92);border-radius:3px;background:linear-gradient(135deg,#f0a080 0,#e0482c 45%,#c83218 100%);"><svg style="left:0;top:0" width="19" height="19" viewBox="0 0 19 19"><path d="M5 5L14 14M14 5L5 14" stroke="#fff" stroke-width="2.2" stroke-linecap="square"/></svg></div>
<div class="grp" style="left:26px;top:510px;width:233px;height:72px;"></div>
<div class="t leg" style="left:32px;top:503px;height:14px;line-height:14px;font-size:11px;color:#000;letter-spacing:-0.27px;">Display Image</div>
<div style="left:43px;top:522px;width:146px;height:25px;background:#c0c0c0;box-shadow:inset 1px 1px 0 #fff,inset -1px -1px 0 #404040;"></div>
<div style="left:44px;top:523px;width:24px;height:23px;box-shadow:inset 1px 1px 0 #fff,inset -1px -1px 0 #808080;background:#c8c8c8;"></div>
<svg style="left:44px;top:523px" width="24" height="23" viewBox="0 0 24 24" preserveAspectRatio="none"><path d="M7 4v16l10-8z" fill="#000090"/></svg>
<div style="left:68px;top:523px;width:24px;height:23px;box-shadow:inset 1px 1px 0 #fff,inset -1px -1px 0 #808080;background:#c0c0c0;"></div>
<svg style="left:68px;top:523px" width="24" height="23" viewBox="0 0 24 24" preserveAspectRatio="none"><rect x="5" y="5" width="14" height="14" fill="#808080"/></svg>
<div style="left:92px;top:523px;width:24px;height:23px;box-shadow:inset 1px 1px 0 #fff,inset -1px -1px 0 #808080;background:#c8c8c8;"></div>
<svg style="left:92px;top:523px" width="24" height="23" viewBox="0 0 24 24" preserveAspectRatio="none"><rect x="3" y="4" width="2.500" height="16" fill="#000090"/><path d="M13 4v16l-8-8zM21 4v16l-8-8z" fill="#000090"/></svg>
<div style="left:116px;top:523px;width:24px;height:23px;box-shadow:inset 1px 1px 0 #fff,inset -1px -1px 0 #808080;background:#c8c8c8;"></div>
<svg style="left:116px;top:523px" width="24" height="23" viewBox="0 0 24 24" preserveAspectRatio="none"><path d="M12 4v16l-9-8zM21 4v16l-9-8z" fill="#000090"/></svg>
<div style="left:140px;top:523px;width:24px;height:23px;box-shadow:inset 1px 1px 0 #fff,inset -1px -1px 0 #808080;background:#c8c8c8;"></div>
<svg style="left:140px;top:523px" width="24" height="23" viewBox="0 0 24 24" preserveAspectRatio="none"><path d="M3 4v16l9-8zM12 4v16l9-8z" fill="#000090"/></svg>
<div style="left:164px;top:523px;width:24px;height:23px;box-shadow:inset 1px 1px 0 #fff,inset -1px -1px 0 #808080;background:#c8c8c8;"></div>
<svg style="left:164px;top:523px" width="24" height="23" viewBox="0 0 24 24" preserveAspectRatio="none"><rect x="18.500" y="4" width="2.500" height="16" fill="#000090"/><path d="M3 4v16l8-8zM11 4v16l8-8z" fill="#000090"/></svg>
<div class="cb" style="left:43px;top:549px;width:13px;height:13px;"></div>
<div class="t" style="left:62px;top:549.5px;height:14px;line-height:14px;font-size:11px;color:#000;letter-spacing:-0.289px;">Exclude Image From Set</div>
<div class="cb" style="left:43px;top:566px;width:13px;height:13px;"><svg style="left:3px;top:3px" width="7" height="7" viewBox="0 0 7 7"><path d="M0 2v3l2.500 2.500 4.500-4.500v-3l-4.500 4.500z" fill="#000"/></svg></div>
<div class="t" style="left:62px;top:566.5px;height:14px;line-height:14px;font-size:11px;color:#000;letter-spacing:-0.255px;">Play Excluded Images</div>
<div class="t" style="left:224px;top:516px;height:14px;line-height:14px;font-size:11px;color:#000;letter-spacing:-0.27px;transform:translateX(-50%);">1</div>
<div class="t" style="left:224px;top:540px;height:14px;line-height:14px;font-size:11px;color:#000;letter-spacing:-0.27px;transform:translateX(-50%);">of</div>
<div class="t" style="left:224px;top:561px;height:14px;line-height:14px;font-size:11px;color:#000;letter-spacing:-0.27px;transform:translateX(-50%);">31</div>
<div class="grp" style="left:262px;top:510px;width:225px;height:72px;"></div>
<div class="t leg" style="left:268px;top:503px;height:14px;line-height:14px;font-size:11px;color:#000;letter-spacing:-0.232px;">Apply Brightness Adjustment</div>
<div class="cbd" style="left:271px;top:527px;width:13px;height:13px;"></div>
<div class="t" style="left:289px;top:527.5px;height:14px;line-height:14px;font-size:11px;color:#aca899;letter-spacing:-0.27px;text-shadow:1px 1px 0 #fff;">Curves</div>
<div class="cbd" style="left:393px;top:527px;width:13px;height:13px;"></div>
<div class="t" style="left:411px;top:527.5px;height:14px;line-height:14px;font-size:11px;color:#aca899;letter-spacing:-0.27px;text-shadow:1px 1px 0 #fff;">Levels</div>
<div class="cb" style="left:271px;top:554px;width:13px;height:13px;"><svg style="left:3px;top:3px" width="7" height="7" viewBox="0 0 7 7"><path d="M0 2v3l2.500 2.500 4.500-4.500v-3l-4.500 4.500z" fill="#000"/></svg></div>
<div class="t" style="left:289px;top:554.5px;height:14px;line-height:14px;font-size:11px;color:#000;letter-spacing:-0.27px;">DDP</div>
<div class="cbd" style="left:393px;top:554px;width:13px;height:13px;"></div>
<div class="t" style="left:411px;top:554.5px;height:14px;line-height:14px;font-size:11px;color:#aca899;letter-spacing:-0.27px;text-shadow:1px 1px 0 #fff;">BCS</div>
<div class="sunk" style="left:27px;top:590px;width:460px;height:153px;"></div>
<div style="left:29px;top:592px;width:276px;height:16px;background:#ece9d8;border-right:1px solid #aca899;border-bottom:1px solid #aca899;box-shadow:inset -1px -1px 0 #d6d2c2,inset 1px 1px 0 #fff;"></div>
<div class="t" style="left:36px;top:593px;height:14px;line-height:14px;font-size:11px;color:#000;letter-spacing:-0.27px;">File</div>
<div style="left:305px;top:592px;width:92px;height:16px;background:#ece9d8;border-right:1px solid #aca899;border-bottom:1px solid #aca899;box-shadow:inset -1px -1px 0 #d6d2c2,inset 1px 1px 0 #fff;"></div>
<div class="t" style="left:312px;top:593px;height:14px;line-height:14px;font-size:11px;color:#000;letter-spacing:-0.27px;">Exclude</div>
<div style="left:397px;top:592px;width:73px;height:16px;background:#ece9d8;border-right:1px solid #aca899;border-bottom:1px solid #aca899;box-shadow:inset -1px -1px 0 #d6d2c2,inset 1px 1px 0 #fff;"></div>
<div class="t" style="left:404px;top:593px;height:14px;line-height:14px;font-size:11px;color:#000;letter-spacing:-0.27px;">Size</div>
<div style="left:29px;top:607.5px;width:441px;height:116.5px;overflow:hidden;">
<div class="t" style="left:4px;top:0px;height:14px;line-height:14px;font-size:11px;color:#000;letter-spacing:-0.31px;">&gt;ASA_ASG_ECC0-331SIZE5-337_NL_C_M1-HA-1-3-2...</div>
<div class="t" style="left:282px;top:0px;height:14px;line-height:14px;font-size:11px;color:#000;letter-spacing:-0.27px;">No</div>
<div class="t" style="left:374px;top:0px;height:14px;line-height:14px;font-size:11px;color:#000;letter-spacing:-0.156px;">2184 x 1472</div>
<div class="t" style="left:4px;top:14px;height:14px;line-height:14px;font-size:11px;color:#000;letter-spacing:-0.303px;">ASA_ASG_ECC0-289SIZE4-860_NL_C_M1-HA-1-3-20...</div>
<div class="t" style="left:282px;top:14px;height:14px;line-height:14px;font-size:11px;color:#000;letter-spacing:-0.27px;">No</div>
<div class="t" style="left:374px;top:14px;height:14px;line-height:14px;font-size:11px;color:#000;letter-spacing:-0.156px;">2184 x 1472</div>
<div class="t" style="left:4px;top:28px;height:14px;line-height:14px;font-size:11px;color:#000;letter-spacing:-0.303px;">ASA_ASG_ECC0-436SIZE5-043_NL_C_M1-HA-1-3-20...</div>
<div class="t" style="left:282px;top:28px;height:14px;line-height:14px;font-size:11px;color:#000;letter-spacing:-0.27px;">No</div>
<div class="t" style="left:374px;top:28px;height:14px;line-height:14px;font-size:11px;color:#000;letter-spacing:-0.156px;">2184 x 1472</div>
<div class="t" style="left:4px;top:42px;height:14px;line-height:14px;font-size:11px;color:#000;letter-spacing:-0.303px;">ASA_ASG_ECC0-347SIZE5-018_NL_C_M1-HA-1-3-20...</div>
<div class="t" style="left:282px;top:42px;height:14px;line-height:14px;font-size:11px;color:#000;letter-spacing:-0.27px;">No</div>
<div class="t" style="left:374px;top:42px;height:14px;line-height:14px;font-size:11px;color:#000;letter-spacing:-0.156px;">2184 x 1472</div>
<div class="t" style="left:4px;top:56px;height:14px;line-height:14px;font-size:11px;color:#000;letter-spacing:-0.285px;">ASA_ASG_ECC0-276SIZE5-110_NL_C_M1-HA-1-3-20...</div>
<div class="t" style="left:282px;top:56px;height:14px;line-height:14px;font-size:11px;color:#000;letter-spacing:-0.27px;">No</div>
<div class="t" style="left:374px;top:56px;height:14px;line-height:14px;font-size:11px;color:#000;letter-spacing:-0.156px;">2184 x 1472</div>
<div class="t" style="left:4px;top:70px;height:14px;line-height:14px;font-size:11px;color:#000;letter-spacing:-0.303px;">ASA_ASG_ECC0-472SIZE5-243_NL_C_M1-HA-1-3-20...</div>
<div class="t" style="left:282px;top:70px;height:14px;line-height:14px;font-size:11px;color:#000;letter-spacing:-0.27px;">No</div>
<div class="t" style="left:374px;top:70px;height:14px;line-height:14px;font-size:11px;color:#000;letter-spacing:-0.156px;">2184 x 1472</div>
<div class="t" style="left:4px;top:84px;height:14px;line-height:14px;font-size:11px;color:#000;letter-spacing:-0.303px;">ASA_ASG_ECC0-356SIZE5-314_NL_C_M1-HA-1-3-20...</div>
<div class="t" style="left:282px;top:84px;height:14px;line-height:14px;font-size:11px;color:#000;letter-spacing:-0.27px;">No</div>
<div class="t" style="left:374px;top:84px;height:14px;line-height:14px;font-size:11px;color:#000;letter-spacing:-0.156px;">2184 x 1472</div>
<div class="t" style="left:4px;top:98px;height:14px;line-height:14px;font-size:11px;color:#000;letter-spacing:-0.303px;">ASA_ASG_ECC0-301SIZE5-453_NL_C_M1-HA-1-3-20...</div>
<div class="t" style="left:282px;top:98px;height:14px;line-height:14px;font-size:11px;color:#000;letter-spacing:-0.27px;">No</div>
<div class="t" style="left:374px;top:98px;height:14px;line-height:14px;font-size:11px;color:#000;letter-spacing:-0.156px;">2184 x 1472</div>
<div class="t" style="left:4px;top:112px;height:14px;line-height:14px;font-size:11px;color:#000;letter-spacing:-0.303px;">ASA_ASG_ECC0-209SIZE5-019_NL_C_M1-HA-1-3-20...</div>
<div class="t" style="left:282px;top:112px;height:14px;line-height:14px;font-size:11px;color:#000;letter-spacing:-0.27px;">No</div>
<div class="t" style="left:374px;top:112px;height:14px;line-height:14px;font-size:11px;color:#000;letter-spacing:-0.156px;">2184 x 1472</div>
</div>
<div style="left:470px;top:592px;width:16px;height:132px;background:#f4f3ee;box-shadow:inset 1px 0 0 #eeede5;"></div>
<div style="left:470px;top:592px;width:16px;height:17px;background:linear-gradient(135deg,#e1eafe 0,#c3d3fd 50%,#b0c4f7 100%);border:1px solid #fff;border-radius:3px;box-shadow:inset 0 0 0 1px #b4c8f6;"><svg style="left:-1px;top:-1px" width="17" height="17" viewBox="0 0 17 17"><path d="M4.500 10.500L8.500 6.500L12.500 10.500" fill="none" stroke="#4d6185" stroke-width="2.200"/></svg></div>
<div style="left:470px;top:610px;width:16px;height:24px;background:linear-gradient(135deg,#e1eafe 0,#c3d3fd 50%,#b0c4f7 100%);border:1px solid #fff;border-radius:3px;box-shadow:inset 0 0 0 1px #b4c8f6;"><div style="left:4px;top:7px;width:7px;height:7px;background:repeating-linear-gradient(180deg,#eef4fe 0,#eef4fe 1px,#8cb0f8 1px,#8cb0f8 2px);"></div></div>
<div style="left:470px;top:707px;width:16px;height:17px;background:linear-gradient(135deg,#e1eafe 0,#c3d3fd 50%,#b0c4f7 100%);border:1px solid #fff;border-radius:3px;box-shadow:inset 0 0 0 1px #b4c8f6;"><svg style="left:-1px;top:-1px" width="17" height="17" viewBox="0 0 17 17"><path d="M4.500 6.500L8.500 10.500L12.500 6.500" fill="none" stroke="#4d6185" stroke-width="2.200"/></svg></div>
<div style="left:29px;top:724px;width:441px;height:17px;background:#f4f3ee;"></div>
<div style="left:29px;top:724px;width:17px;height:17px;background:linear-gradient(135deg,#e1eafe 0,#c3d3fd 50%,#b0c4f7 100%);border:1px solid #fff;border-radius:3px;box-shadow:inset 0 0 0 1px #b4c8f6;"><svg style="left:-1px;top:-1px" width="17" height="17" viewBox="0 0 17 17"><path d="M10.500 4.500L6.500 8.500L10.500 12.500" fill="none" stroke="#4d6185" stroke-width="2.200"/></svg></div>
<div style="left:47px;top:724px;width:276px;height:17px;background:linear-gradient(135deg,#e1eafe 0,#c3d3fd 50%,#b0c4f7 100%);border:1px solid #fff;border-radius:3px;box-shadow:inset 0 0 0 1px #b4c8f6;"><div style="left:133px;top:4px;width:7px;height:7px;background:repeating-linear-gradient(90deg,#eef4fe 0,#eef4fe 1px,#8cb0f8 1px,#8cb0f8 2px);"></div></div>
<div style="left:453px;top:724px;width:17px;height:17px;background:linear-gradient(135deg,#e1eafe 0,#c3d3fd 50%,#b0c4f7 100%);border:1px solid #fff;border-radius:3px;box-shadow:inset 0 0 0 1px #b4c8f6;"><svg style="left:-1px;top:-1px" width="17" height="17" viewBox="0 0 17 17"><path d="M6.500 4.500L10.500 8.500L6.500 12.500" fill="none" stroke="#4d6185" stroke-width="2.200"/></svg></div>
<div style="left:470px;top:724px;width:16px;height:17px;background:#ece9d8;"></div>
<div class="grp" style="left:27px;top:757px;width:343px;height:97px;"></div>
<div class="t leg" style="left:34px;top:750px;height:14px;line-height:14px;font-size:11px;color:#000;letter-spacing:-0.296px;">Process Blink Files Using</div>
<div class="btn" style="left:33px;top:768px;width:63px;height:23px;"></div>
<div class="t" style="left:64.5px;top:772px;height:14px;line-height:14px;font-size:11px;color:#000;letter-spacing:-0.27px;transform:translateX(-50%);">Calibrate</div>
<div class="btn" style="left:99px;top:768px;width:63px;height:23px;"></div>
<div class="t" style="left:130.5px;top:772px;height:14px;line-height:14px;font-size:11px;color:#000;letter-spacing:-0.27px;transform:translateX(-50%);">Filter</div>
<div class="btn" style="left:165px;top:768px;width:63px;height:23px;"></div>
<div class="t" style="left:196.5px;top:772px;height:14px;line-height:14px;font-size:11px;color:#000;letter-spacing:-0.27px;transform:translateX(-50%);">Bayer</div>
<div class="btn" style="left:232px;top:768px;width:63px;height:23px;"></div>
<div class="t" style="left:263.5px;top:772px;height:14px;line-height:14px;font-size:11px;color:#000;letter-spacing:-0.27px;transform:translateX(-50%);">Resize</div>
<div class="btn" style="left:300px;top:768px;width:63px;height:23px;"></div>
<div class="t" style="left:331.5px;top:772px;height:14px;line-height:14px;font-size:11px;color:#000;letter-spacing:-0.27px;transform:translateX(-50%);">Crop</div>
<div class="btn" style="left:33px;top:795px;width:63px;height:23px;"></div>
<div class="t" style="left:64.5px;top:799px;height:14px;line-height:14px;font-size:11px;color:#000;letter-spacing:-0.27px;transform:translateX(-50%);">Normalize</div>
<div class="btn" style="left:99px;top:795px;width:63px;height:23px;"></div>
<div class="t" style="left:130.5px;top:799px;height:14px;line-height:14px;font-size:11px;color:#000;letter-spacing:-0.27px;transform:translateX(-50%);">Grade</div>
<div class="btn" style="left:165px;top:795px;width:63px;height:23px;"></div>
<div class="t" style="left:196.5px;top:799px;height:14px;line-height:14px;font-size:11px;color:#000;letter-spacing:-0.27px;transform:translateX(-50%);">Align Planet</div>
<div class="btn" style="left:232px;top:795px;width:63px;height:23px;"></div>
<div class="t" style="left:263.5px;top:799px;height:14px;line-height:14px;font-size:11px;color:#000;letter-spacing:-0.27px;transform:translateX(-50%);">Align TSR</div>
<div class="btn" style="left:300px;top:795px;width:63px;height:23px;"></div>
<div class="t" style="left:331.5px;top:799px;height:14px;line-height:14px;font-size:11px;color:#000;letter-spacing:-0.27px;transform:translateX(-50%);">Combine</div>
<div class="btn" style="left:33px;top:823px;width:63px;height:23px;"></div>
<div class="t" style="left:64.5px;top:827px;height:14px;line-height:14px;font-size:11px;color:#000;letter-spacing:-0.27px;transform:translateX(-50%);">File List</div>
<div class="btn" style="left:376px;top:768px;width:108px;height:23px;"></div>
<div class="t" style="left:430px;top:772px;height:14px;line-height:14px;font-size:11px;color:#000;letter-spacing:-0.27px;transform:translateX(-50%);">Select New Input</div>
<div class="btn" style="left:376px;top:795px;width:108px;height:23px;"></div>
<div class="t" style="left:430px;top:799px;height:14px;line-height:14px;font-size:11px;color:#000;letter-spacing:-0.27px;transform:translateX(-50%);">Clear Exclude Flags</div>
<div class="btn" style="left:405px;top:825px;width:48px;height:23px;"></div>
<div class="t" style="left:429px;top:829px;height:14px;line-height:14px;font-size:11px;color:#000;letter-spacing:-0.27px;transform:translateX(-50%);">Done</div>
<div style="left:945px;top:457px;width:471px;height:407px;background:#ece9d8;border-top:1px solid #f8f7f0;"></div>
<div style="left:940px;top:457px;width:5px;height:413px;background:linear-gradient(90deg,#7b88cc 0.00%,#7b88cc 60.00%,#e4e8f4 60.00%,#e4e8f4 100.00%);"></div>
<div style="left:1416px;top:457px;width:5px;height:413px;background:linear-gradient(90deg,#d0d4f0 0.00%,#d0d4f0 30.00%,#7078c0 30.00%,#7078c0 80.00%,#5c64b0 80.00%,#5c64b0 100.00%);"></div>
<div style="left:943px;top:864px;width:475.5px;height:6px;background:linear-gradient(180deg,#e4e8f8 0.00%,#e4e8f8 41.67%,#7078c0 41.67%,#7078c0 83.33%,#3c4490 83.33%,#3c4490 100.00%);"></div>
<div style="left:940px;top:428px;width:481px;height:29px;background:linear-gradient(180deg,#8fa8ea 0,#7b96e0 10%,#7994e0 35%,#7b9ae6 70%,#82a5ef 92%,#7e9de8 100%);border-radius:7px 7px 0 0;box-shadow:inset 1px 0 0 #6a78c8,inset -1px 0 0 #6a78c8,inset 2px 0 0 rgba(0,0,60,0.25),inset -2px 0 0 rgba(0,0,60,0.25);"></div>
<div class="t" style="left:966px;top:434.5px;height:17px;line-height:17px;font-size:14px;color:#d4dff7;font-weight:bold;transform:scaleX(0.9116);transform-origin:0 50%;">Digital Development - ASA_ASG_ECC0-331SIZE5-337_NL_C...</div>
<div style="left:1350px;top:433px;width:21px;height:21px;border:1px solid rgba(240,244,253,0.8);border-radius:3px;background:linear-gradient(135deg,#8fa9ee 0,#5d7fe0 50%,#5878d8 100%);"><div style="left:4px;top:13px;width:8px;height:3px;background:#fff"></div></div>
<div style="left:1373px;top:433px;width:21px;height:21px;border:1px solid rgba(240,244,253,0.8);border-radius:3px;opacity:0.55;background:linear-gradient(135deg,#8fa9ee 0,#5d7fe0 50%,#5878d8 100%);"><div style="left:4px;top:4px;width:11px;height:11px;border:1px solid #9db4ee;border-top-width:3px"></div></div>
<div style="left:1396px;top:433px;width:21px;height:21px;border:1px solid rgba(240,244,253,0.8);border-radius:3px;background:linear-gradient(135deg,#d8a0a8 0,#c2727a 50%,#b4656e 100%);"><svg style="left:0;top:0" width="19" height="19" viewBox="0 0 19 19"><path d="M5 5L14 14M14 5L5 14" stroke="#fff" stroke-width="2.2" stroke-linecap="square"/></svg></div>
<svg style="left:945px;top:434px" width="17" height="15" viewBox="0 0 17 15"><rect x="0.500" y="0.500" width="16" height="14" rx="1" fill="#fff" stroke="#e8eefc"/><rect x="1" y="1" width="15" height="3" fill="#3a6ad8"/></svg>
<div style="left:950px;top:483px;width:463px;height:381px;background:#ece9d8;box-shadow:inset 1px 1px 0 #fff,inset -1px -1px 0 #8a8778,inset -2px -2px 0 #94917f;"></div>
<div style="left:950px;top:463px;width:119px;height:22px;background:#ece9d8;box-shadow:inset 1px 1px 0 #fff,inset -1px 0 0 #716f64,inset -2px 0 0 #aca899;border-radius:2px 2px 0 0;"></div>
<div class="t" style="left:956px;top:466px;height:14px;line-height:14px;font-size:11px;color:#000;letter-spacing:-0.15px;">Brightness and Range</div>
<div style="left:1069px;top:466px;width:109px;height:17px;background:#ece9d8;box-shadow:inset 0 1px 0 #fff,inset -1px 0 0 #716f64,inset -2px 0 0 #aca899;border-radius:0 2px 0 0;"></div>
<div class="t" style="left:1073px;top:468px;height:14px;line-height:14px;font-size:11px;color:#000;letter-spacing:-0.241px;">Color and Sharpness</div>
<div class="grp" style="left:968px;top:499px;width:428px;height:189px;"></div>
<div class="t leg" style="left:975px;top:492px;height:14px;line-height:14px;font-size:11px;color:#000;letter-spacing:-0.28px;">Stretch Parameters</div>
<div class="t" style="left:1345px;top:503px;height:14px;line-height:14px;font-size:11px;color:#000;letter-spacing:-0.075px;">Value:</div>
<div class="t" style="left:973px;top:526px;height:14px;line-height:14px;font-size:11px;color:#000;letter-spacing:-0.191px;">Background</div>
<div style="left:1053px;top:519px;width:1px;height:4px;background:linear-gradient(180deg,#222 0,#222 75%,#888 100%);"></div>
<div style="left:1079px;top:519px;width:1px;height:4px;background:linear-gradient(180deg,#222 0,#222 75%,#888 100%);"></div>
<div style="left:1105px;top:519px;width:1px;height:4px;background:linear-gradient(180deg,#222 0,#222 75%,#888 100%);"></div>
<div style="left:1131px;top:519px;width:1px;height:4px;background:linear-gradient(180deg,#222 0,#222 75%,#888 100%);"></div>
<div style="left:1157px;top:519px;width:1px;height:4px;background:linear-gradient(180deg,#222 0,#222 75%,#888 100%);"></div>
<div style="left:1183px;top:519px;width:1px;height:4px;background:linear-gradient(180deg,#222 0,#222 75%,#888 100%);"></div>
<div style="left:1209px;top:519px;width:1px;height:4px;background:linear-gradient(180deg,#222 0,#222 75%,#888 100%);"></div>
<div style="left:1235px;top:519px;width:1px;height:4px;background:linear-gradient(180deg,#222 0,#222 75%,#888 100%);"></div>
<div style="left:1262px;top:519px;width:1px;height:4px;background:linear-gradient(180deg,#222 0,#222 75%,#888 100%);"></div>
<div style="left:1288px;top:519px;width:1px;height:4px;background:linear-gradient(180deg,#222 0,#222 75%,#888 100%);"></div>
<div style="left:1314px;top:519px;width:1px;height:4px;background:linear-gradient(180deg,#222 0,#222 75%,#888 100%);"></div>
<div style="left:1048px;top:532px;width:270px;height:4px;background:#dcdacb;border-top:1px solid #6f6d62;border-left:1px solid #6f6d62;border-bottom:1px solid #fff;"></div>
<svg style="left:1048px;top:523px" width="11" height="22" viewBox="0 0 11 22"><path d="M5.500 0.500L10.500 5.500V21.500H0.500V5.500z" fill="#eeece1" stroke="#7d7b70"/><path d="M5.500 1.800L1.500 5.800V20.500" fill="none" stroke="#fff"/><path d="M9.500 6V20.500H1.500" fill="none" stroke="#b9b6a5"/></svg>
<div class="sunk" style="left:1337px;top:521.5px;width:49px;height:19px;"></div>
<div class="t" style="left:1361.5px;top:524px;height:14px;line-height:14px;font-size:11px;color:#000;letter-spacing:-0.27px;transform:translateX(-50%);">0</div>
<div class="t" style="left:973px;top:569px;height:14px;line-height:14px;font-size:11px;color:#000;letter-spacing:-0.25px;">Backgd Wt.</div>
<div style="left:1053px;top:562px;width:1px;height:4px;background:linear-gradient(180deg,#222 0,#222 75%,#888 100%);"></div>
<div style="left:1079px;top:562px;width:1px;height:4px;background:linear-gradient(180deg,#222 0,#222 75%,#888 100%);"></div>
<div style="left:1105px;top:562px;width:1px;height:4px;background:linear-gradient(180deg,#222 0,#222 75%,#888 100%);"></div>
<div style="left:1131px;top:562px;width:1px;height:4px;background:linear-gradient(180deg,#222 0,#222 75%,#888 100%);"></div>
<div style="left:1157px;top:562px;width:1px;height:4px;background:linear-gradient(180deg,#222 0,#222 75%,#888 100%);"></div>
<div style="left:1183px;top:562px;width:1px;height:4px;background:linear-gradient(180deg,#222 0,#222 75%,#888 100%);"></div>
<div style="left:1209px;top:562px;width:1px;height:4px;background:linear-gradient(180deg,#222 0,#222 75%,#888 100%);"></div>
<div style="left:1235px;top:562px;width:1px;height:4px;background:linear-gradient(180deg,#222 0,#222 75%,#888 100%);"></div>
<div style="left:1262px;top:562px;width:1px;height:4px;background:linear-gradient(180deg,#222 0,#222 75%,#888 100%);"></div>
<div style="left:1288px;top:562px;width:1px;height:4px;background:linear-gradient(180deg,#222 0,#222 75%,#888 100%);"></div>
<div style="left:1314px;top:562px;width:1px;height:4px;background:linear-gradient(180deg,#222 0,#222 75%,#888 100%);"></div>
<div style="left:1048px;top:577px;width:270px;height:4px;background:#dcdacb;border-top:1px solid #6f6d62;border-left:1px solid #6f6d62;border-bottom:1px solid #fff;"></div>
<svg style="left:1250px;top:568px" width="11" height="22" viewBox="0 0 11 22"><path d="M5.500 0.500L10.500 5.500V21.500H0.500V5.500z" fill="#eeece1" stroke="#7d7b70"/><path d="M5.500 1.800L1.500 5.800V20.500" fill="none" stroke="#fff"/><path d="M9.500 6V20.500H1.500" fill="none" stroke="#b9b6a5"/></svg>
<div class="sunk" style="left:1337px;top:566px;width:49px;height:19px;"></div>
<div class="t" style="left:1361.5px;top:568.5px;height:14px;line-height:14px;font-size:11px;color:#000;letter-spacing:0.039px;transform:translateX(-50%);">0.99986</div>
<div class="t" style="left:973px;top:613px;height:14px;line-height:14px;font-size:11px;color:#000;letter-spacing:-0.248px;">Break-Point</div>
<div style="left:1053px;top:606px;width:1px;height:4px;background:linear-gradient(180deg,#222 0,#222 75%,#888 100%);"></div>
<div style="left:1079px;top:606px;width:1px;height:4px;background:linear-gradient(180deg,#222 0,#222 75%,#888 100%);"></div>
<div style="left:1105px;top:606px;width:1px;height:4px;background:linear-gradient(180deg,#222 0,#222 75%,#888 100%);"></div>
<div style="left:1131px;top:606px;width:1px;height:4px;background:linear-gradient(180deg,#222 0,#222 75%,#888 100%);"></div>
<div style="left:1157px;top:606px;width:1px;height:4px;background:linear-gradient(180deg,#222 0,#222 75%,#888 100%);"></div>
<div style="left:1183px;top:606px;width:1px;height:4px;background:linear-gradient(180deg,#222 0,#222 75%,#888 100%);"></div>
<div style="left:1209px;top:606px;width:1px;height:4px;background:linear-gradient(180deg,#222 0,#222 75%,#888 100%);"></div>
<div style="left:1235px;top:606px;width:1px;height:4px;background:linear-gradient(180deg,#222 0,#222 75%,#888 100%);"></div>
<div style="left:1262px;top:606px;width:1px;height:4px;background:linear-gradient(180deg,#222 0,#222 75%,#888 100%);"></div>
<div style="left:1288px;top:606px;width:1px;height:4px;background:linear-gradient(180deg,#222 0,#222 75%,#888 100%);"></div>
<div style="left:1314px;top:606px;width:1px;height:4px;background:linear-gradient(180deg,#222 0,#222 75%,#888 100%);"></div>
<div style="left:1048px;top:619px;width:270px;height:4px;background:#dcdacb;border-top:1px solid #6f6d62;border-left:1px solid #6f6d62;border-bottom:1px solid #fff;"></div>
<svg style="left:1115px;top:610px" width="11" height="22" viewBox="0 0 11 22"><path d="M5.500 0.500L10.500 5.500V21.500H0.500V5.500z" fill="#eeece1" stroke="#7d7b70"/><path d="M5.500 1.800L1.500 5.800V20.500" fill="none" stroke="#fff"/><path d="M9.500 6V20.500H1.500" fill="none" stroke="#b9b6a5"/></svg>
<div class="sunk" style="left:1337px;top:610.5px;width:49px;height:19px;"></div>
<div class="t" style="left:1361.5px;top:613px;height:14px;line-height:14px;font-size:11px;color:#000;letter-spacing:-0.27px;transform:translateX(-50%);">130</div>
<div class="t" style="left:973px;top:657px;height:14px;line-height:14px;font-size:11px;color:#000;letter-spacing:-0.355px;">Range</div>
<div style="left:1053px;top:649px;width:1px;height:4px;background:linear-gradient(180deg,#222 0,#222 75%,#888 100%);"></div>
<div style="left:1079px;top:649px;width:1px;height:4px;background:linear-gradient(180deg,#222 0,#222 75%,#888 100%);"></div>
<div style="left:1105px;top:649px;width:1px;height:4px;background:linear-gradient(180deg,#222 0,#222 75%,#888 100%);"></div>
<div style="left:1131px;top:649px;width:1px;height:4px;background:linear-gradient(180deg,#222 0,#222 75%,#888 100%);"></div>
<div style="left:1157px;top:649px;width:1px;height:4px;background:linear-gradient(180deg,#222 0,#222 75%,#888 100%);"></div>
<div style="left:1183px;top:649px;width:1px;height:4px;background:linear-gradient(180deg,#222 0,#222 75%,#888 100%);"></div>
<div style="left:1209px;top:649px;width:1px;height:4px;background:linear-gradient(180deg,#222 0,#222 75%,#888 100%);"></div>
<div style="left:1235px;top:649px;width:1px;height:4px;background:linear-gradient(180deg,#222 0,#222 75%,#888 100%);"></div>
<div style="left:1262px;top:649px;width:1px;height:4px;background:linear-gradient(180deg,#222 0,#222 75%,#888 100%);"></div>
<div style="left:1288px;top:649px;width:1px;height:4px;background:linear-gradient(180deg,#222 0,#222 75%,#888 100%);"></div>
<div style="left:1314px;top:649px;width:1px;height:4px;background:linear-gradient(180deg,#222 0,#222 75%,#888 100%);"></div>
<div style="left:1048px;top:663px;width:270px;height:4px;background:#dcdacb;border-top:1px solid #6f6d62;border-left:1px solid #6f6d62;border-bottom:1px solid #fff;"></div>
<svg style="left:1106px;top:654px" width="11" height="22" viewBox="0 0 11 22"><path d="M5.500 0.500L10.500 5.500V21.500H0.500V5.500z" fill="#eeece1" stroke="#7d7b70"/><path d="M5.500 1.800L1.500 5.800V20.500" fill="none" stroke="#fff"/><path d="M9.500 6V20.500H1.500" fill="none" stroke="#b9b6a5"/></svg>
<div class="sunk" style="left:1337px;top:655px;width:49px;height:19px;"></div>
<div class="t" style="left:1361.5px;top:657.5px;height:14px;line-height:14px;font-size:11px;color:#000;letter-spacing:-0.27px;transform:translateX(-50%);">1.130</div>
<div style="left:1031px;top:648px;width:3px;height:1px;background:#000;"></div>
<div style="left:1327px;top:648px;width:5px;height:1px;background:#000;"></div>
<div style="left:1329px;top:646px;width:1px;height:5px;background:#000;"></div>
<div class="grp" style="left:968px;top:704px;width:429px;height:84px;"></div>
<div class="t leg" style="left:974px;top:697px;height:14px;line-height:14px;font-size:11px;color:#000;letter-spacing:-0.206px;">Break-Point and Background Slider Brightness Strength Range</div>
<div class="t" style="left:1046px;top:716px;height:14px;line-height:14px;font-size:11px;color:#000;letter-spacing:-0.27px;">Low</div>
<div class="t" style="left:1110px;top:716px;height:14px;line-height:14px;font-size:11px;color:#000;letter-spacing:-0.27px;">Medium</div>
<div class="t" style="left:1184px;top:716px;height:14px;line-height:14px;font-size:11px;color:#000;letter-spacing:-0.27px;">High</div>
<div class="t" style="left:1250px;top:716px;height:14px;line-height:14px;font-size:11px;color:#000;letter-spacing:-0.27px;">Aggressive</div>
<div class="t" style="left:1321px;top:716px;height:14px;line-height:14px;font-size:11px;color:#000;letter-spacing:-0.27px;">Very Aggress.</div>
<div class="t" style="left:974px;top:738px;height:14px;line-height:14px;font-size:11px;color:#000;letter-spacing:-0.25px;">Backgd Wt.</div>
<div class="t" style="left:974px;top:761px;height:14px;line-height:14px;font-size:11px;color:#000;letter-spacing:-0.248px;">Break-Point</div>
<svg style="left:1046px;top:739px" width="12" height="12" viewBox="0 0 12 12"><circle cx="6" cy="6" r="5.500" fill="#fff"/><path d="M1.800 10.200A6 6 0 0 1 10.200 1.800" fill="none" stroke="#8d8a7b" stroke-width="1"/><path d="M2.600 9.400A4.800 4.800 0 0 1 9.400 2.600" fill="none" stroke="#55534a" stroke-width="1"/><path d="M10.200 1.800A6 6 0 0 1 1.800 10.200" fill="none" stroke="#fff" stroke-width="1"/><path d="M9.400 2.600A4.800 4.800 0 0 1 2.600 9.400" fill="none" stroke="#dcd9c9" stroke-width="1"/><circle cx="6" cy="6" r="2" fill="#000"/></svg>
<div class="t" style="left:1064px;top:738px;height:14px;line-height:14px;font-size:11px;color:#000;letter-spacing:-0.27px;">0.995</div>
<svg style="left:1046px;top:761px" width="12" height="12" viewBox="0 0 12 12"><circle cx="6" cy="6" r="5.500" fill="#fff"/><path d="M1.800 10.200A6 6 0 0 1 10.200 1.800" fill="none" stroke="#8d8a7b" stroke-width="1"/><path d="M2.600 9.400A4.800 4.800 0 0 1 9.400 2.600" fill="none" stroke="#55534a" stroke-width="1"/><path d="M10.200 1.800A6 6 0 0 1 1.800 10.200" fill="none" stroke="#fff" stroke-width="1"/><path d="M9.400 2.600A4.800 4.800 0 0 1 2.600 9.400" fill="none" stroke="#dcd9c9" stroke-width="1"/></svg>
<div class="t" style="left:1064px;top:761px;height:14px;line-height:14px;font-size:11px;color:#000;letter-spacing:-0.27px;">0-65535</div>
<svg style="left:1113px;top:739px" width="12" height="12" viewBox="0 0 12 12"><circle cx="6" cy="6" r="5.500" fill="#fff"/><path d="M1.800 10.200A6 6 0 0 1 10.200 1.800" fill="none" stroke="#8d8a7b" stroke-width="1"/><path d="M2.600 9.400A4.800 4.800 0 0 1 9.400 2.600" fill="none" stroke="#55534a" stroke-width="1"/><path d="M10.200 1.800A6 6 0 0 1 1.800 10.200" fill="none" stroke="#fff" stroke-width="1"/><path d="M9.400 2.600A4.800 4.800 0 0 1 2.600 9.400" fill="none" stroke="#dcd9c9" stroke-width="1"/></svg>
<div class="t" style="left:1130px;top:738px;height:14px;line-height:14px;font-size:11px;color:#000;letter-spacing:-0.27px;">0.90</div>
<svg style="left:1113px;top:761px" width="12" height="12" viewBox="0 0 12 12"><circle cx="6" cy="6" r="5.500" fill="#fff"/><path d="M1.800 10.200A6 6 0 0 1 10.200 1.800" fill="none" stroke="#8d8a7b" stroke-width="1"/><path d="M2.600 9.400A4.800 4.800 0 0 1 9.400 2.600" fill="none" stroke="#55534a" stroke-width="1"/><path d="M10.200 1.800A6 6 0 0 1 1.800 10.200" fill="none" stroke="#fff" stroke-width="1"/><path d="M9.400 2.600A4.800 4.800 0 0 1 2.600 9.400" fill="none" stroke="#dcd9c9" stroke-width="1"/></svg>
<div class="t" style="left:1130px;top:761px;height:14px;line-height:14px;font-size:11px;color:#000;letter-spacing:-0.27px;">0-10000</div>
<svg style="left:1186px;top:739px" width="12" height="12" viewBox="0 0 12 12"><circle cx="6" cy="6" r="5.500" fill="#fff"/><path d="M1.800 10.200A6 6 0 0 1 10.200 1.800" fill="none" stroke="#8d8a7b" stroke-width="1"/><path d="M2.600 9.400A4.800 4.800 0 0 1 9.400 2.600" fill="none" stroke="#55534a" stroke-width="1"/><path d="M10.200 1.800A6 6 0 0 1 1.800 10.200" fill="none" stroke="#fff" stroke-width="1"/><path d="M9.400 2.600A4.800 4.800 0 0 1 2.600 9.400" fill="none" stroke="#dcd9c9" stroke-width="1"/></svg>
<div class="t" style="left:1204px;top:738px;height:14px;line-height:14px;font-size:11px;color:#000;letter-spacing:-0.27px;">0.75</div>
<svg style="left:1186px;top:761px" width="12" height="12" viewBox="0 0 12 12"><circle cx="6" cy="6" r="5.500" fill="#fff"/><path d="M1.800 10.200A6 6 0 0 1 10.200 1.800" fill="none" stroke="#8d8a7b" stroke-width="1"/><path d="M2.600 9.400A4.800 4.800 0 0 1 9.400 2.600" fill="none" stroke="#55534a" stroke-width="1"/><path d="M10.200 1.800A6 6 0 0 1 1.800 10.200" fill="none" stroke="#fff" stroke-width="1"/><path d="M9.400 2.600A4.800 4.800 0 0 1 2.600 9.400" fill="none" stroke="#dcd9c9" stroke-width="1"/></svg>
<div class="t" style="left:1204px;top:761px;height:14px;line-height:14px;font-size:11px;color:#000;letter-spacing:-0.27px;">0-5000</div>
<svg style="left:1252px;top:739px" width="12" height="12" viewBox="0 0 12 12"><circle cx="6" cy="6" r="5.500" fill="#fff"/><path d="M1.800 10.200A6 6 0 0 1 10.200 1.800" fill="none" stroke="#8d8a7b" stroke-width="1"/><path d="M2.600 9.400A4.800 4.800 0 0 1 9.400 2.600" fill="none" stroke="#55534a" stroke-width="1"/><path d="M10.200 1.800A6 6 0 0 1 1.800 10.200" fill="none" stroke="#fff" stroke-width="1"/><path d="M9.400 2.600A4.800 4.800 0 0 1 2.600 9.400" fill="none" stroke="#dcd9c9" stroke-width="1"/></svg>
<div class="t" style="left:1271px;top:738px;height:14px;line-height:14px;font-size:11px;color:#000;letter-spacing:-0.27px;">0.50</div>
<svg style="left:1252px;top:761px" width="12" height="12" viewBox="0 0 12 12"><circle cx="6" cy="6" r="5.500" fill="#fff"/><path d="M1.800 10.200A6 6 0 0 1 10.200 1.800" fill="none" stroke="#8d8a7b" stroke-width="1"/><path d="M2.600 9.400A4.800 4.800 0 0 1 9.400 2.600" fill="none" stroke="#55534a" stroke-width="1"/><path d="M10.200 1.800A6 6 0 0 1 1.800 10.200" fill="none" stroke="#fff" stroke-width="1"/><path d="M9.400 2.600A4.800 4.800 0 0 1 2.600 9.400" fill="none" stroke="#dcd9c9" stroke-width="1"/></svg>
<div class="t" style="left:1271px;top:761px;height:14px;line-height:14px;font-size:11px;color:#000;letter-spacing:-0.27px;">0-1000</div>
<svg style="left:1324px;top:739px" width="12" height="12" viewBox="0 0 12 12"><circle cx="6" cy="6" r="5.500" fill="#fff"/><path d="M1.800 10.200A6 6 0 0 1 10.200 1.800" fill="none" stroke="#8d8a7b" stroke-width="1"/><path d="M2.600 9.400A4.800 4.800 0 0 1 9.400 2.600" fill="none" stroke="#55534a" stroke-width="1"/><path d="M10.200 1.800A6 6 0 0 1 1.800 10.200" fill="none" stroke="#fff" stroke-width="1"/><path d="M9.400 2.600A4.800 4.800 0 0 1 2.600 9.400" fill="none" stroke="#dcd9c9" stroke-width="1"/></svg>
<div class="t" style="left:1342px;top:738px;height:14px;line-height:14px;font-size:11px;color:#000;letter-spacing:-0.27px;">0.0</div>
<svg style="left:1324px;top:761px" width="12" height="12" viewBox="0 0 12 12"><circle cx="6" cy="6" r="5.500" fill="#fff"/><path d="M1.800 10.200A6 6 0 0 1 10.200 1.800" fill="none" stroke="#8d8a7b" stroke-width="1"/><path d="M2.600 9.400A4.800 4.800 0 0 1 9.400 2.600" fill="none" stroke="#55534a" stroke-width="1"/><path d="M10.200 1.800A6 6 0 0 1 1.800 10.200" fill="none" stroke="#fff" stroke-width="1"/><path d="M9.400 2.600A4.800 4.800 0 0 1 2.600 9.400" fill="none" stroke="#dcd9c9" stroke-width="1"/><circle cx="6" cy="6" r="2" fill="#000"/></svg>
<div class="t" style="left:1342px;top:761px;height:14px;line-height:14px;font-size:11px;color:#000;letter-spacing:-0.27px;">0-500</div>
<div class="cb" style="left:968px;top:803px;width:13px;height:13px;"><svg style="left:3px;top:3px" width="7" height="7" viewBox="0 0 7 7"><path d="M0 2v3l2.500 2.500 4.500-4.500v-3l-4.500 4.500z" fill="#000"/></svg></div>
<div class="t" style="left:987px;top:803.5px;height:14px;line-height:14px;font-size:11px;color:#000;letter-spacing:-0.38px;">Enable Sliders</div>
<div class="cb" style="left:1067px;top:803px;width:13px;height:13px;"></div>
<div class="t" style="left:1085px;top:803.5px;height:14px;line-height:14px;font-size:11px;color:#000;letter-spacing:-0.208px;">Lock Image</div>
<div class="cb" style="left:968px;top:826px;width:13px;height:13px;"></div>
<div class="t" style="left:987px;top:826.5px;height:14px;line-height:14px;font-size:11px;color:#000;letter-spacing:-0.202px;">To All Images</div>
<div class="btn" style="left:1166px;top:798px;width:74px;height:22px;"></div>
<div class="t" style="left:1203px;top:802px;height:14px;line-height:14px;font-size:11px;color:#000;letter-spacing:-0.27px;transform:translateX(-50%);">Reset Range</div>
<div class="btn" style="left:1243px;top:798px;width:76px;height:22px;"></div>
<div class="t" style="left:1281px;top:802px;height:14px;line-height:14px;font-size:11px;color:#000;letter-spacing:-0.27px;transform:translateX(-50%);">Reset Sliders</div>
<div class="btn" style="left:1331px;top:798px;width:60px;height:22px;"></div>
<div class="t" style="left:1361px;top:802px;height:14px;line-height:14px;font-size:11px;color:#000;letter-spacing:-0.27px;transform:translateX(-50%);">Auto</div>
<div class="btn" style="left:1257px;top:826px;width:62px;height:22px;"></div>
<div class="t" style="left:1288px;top:830px;height:14px;line-height:14px;font-size:11px;color:#000;letter-spacing:-0.27px;transform:translateX(-50%);">Apply</div>
<div class="btn" style="left:1331px;top:826px;width:60px;height:22px;"></div>
<div class="t" style="left:1361px;top:830px;height:14px;line-height:14px;font-size:11px;color:#000;letter-spacing:-0.27px;transform:translateX(-50%);">Done</div>
</div></body></html>
